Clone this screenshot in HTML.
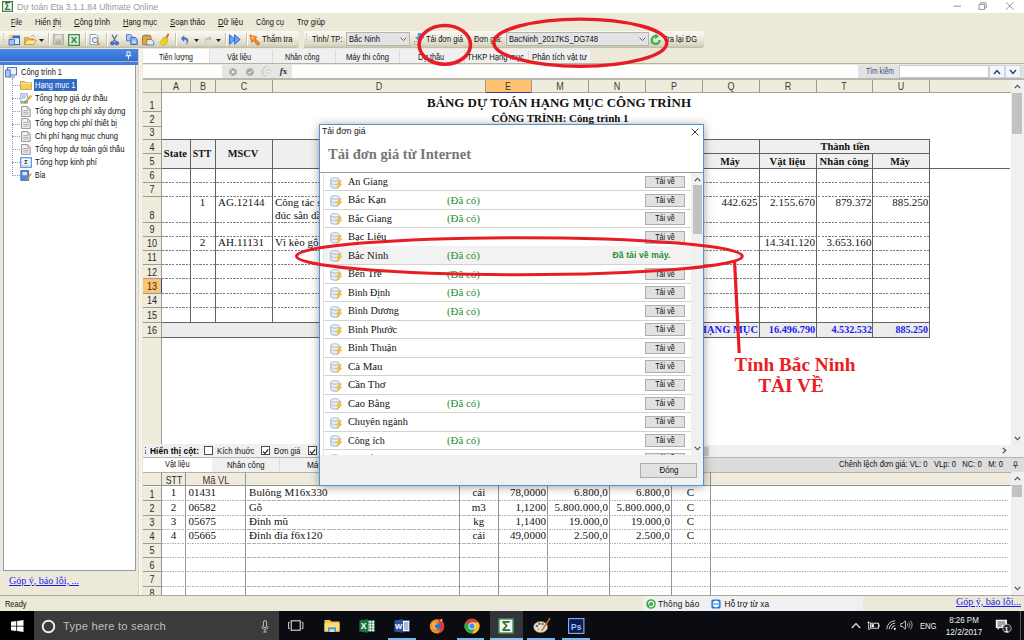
<!DOCTYPE html>
<html lang="vi"><head><meta charset="utf-8"><title>Dự toán Eta</title>
<style>
html,body{margin:0;padding:0;}
body{width:1024px;height:640px;overflow:hidden;position:relative;background:#ece9d8;font-family:"Liberation Sans",sans-serif;}
div,span.t,svg.a{position:absolute;box-sizing:border-box;}
.t{white-space:pre;color:#000;}
.s{font-family:"Liberation Sans",sans-serif;}
.r{font-family:"Liberation Serif",serif;}
.b{font-weight:bold;}
</style></head><body>
<div style="left:0px;top:0px;width:1024px;height:13.3px;background:#fff;"></div>
<svg class="a" style="left:2px;top:1px" width="11" height="11" viewBox="0 0 11 11"><rect x="0" y="0" width="11" height="11" fill="#3c7c46"/><rect x="1.2" y="1.2" width="8.6" height="8.6" fill="#f4f8f4"/><text x="5.5" y="9" font-size="10" font-family="Liberation Sans, sans-serif" font-weight="bold" text-anchor="middle" fill="#2f6f3a">Σ</text></svg>
<span class="t s" style="top:0.80px;font-size:9.3px;line-height:13px;left:17px;transform-origin:0 50%;transform:scaleX(0.9247);color:#999;">Dự toán Eta 3.1.1.84 Ultimate Online</span>
<svg class="a" style="left:950px;top:0" width="70" height="13" viewBox="0 0 70 13" fill="none" stroke="#8a8a8a" stroke-width="0.9"><path d="M3.5 6.2H11"/><path d="M29 4.3H34.6V9.4H29ZM30.6 4.3V2.8H36.2V7.9H34.6"/><path d="M56 2.2L63.6 9.6M63.6 2.2L56 9.6"/></svg>
<span class="t s" style="top:16.80px;font-size:8.25px;line-height:12px;left:10.5px;transform-origin:0 50%;transform:scaleX(0.8263);color:#111;"><u>F</u>ile</span>
<span class="t s" style="top:16.80px;font-size:8.25px;line-height:12px;left:35px;transform-origin:0 50%;transform:scaleX(0.9291);color:#111;">Hiển <u>t</u>hị</span>
<span class="t s" style="top:16.80px;font-size:8.25px;line-height:12px;left:74px;transform-origin:0 50%;transform:scaleX(0.9339);color:#111;"><u>C</u>ông trình</span>
<span class="t s" style="top:16.80px;font-size:8.25px;line-height:12px;left:123px;transform-origin:0 50%;transform:scaleX(0.9037);color:#111;"><u>H</u>ạng mục</span>
<span class="t s" style="top:16.80px;font-size:8.25px;line-height:12px;left:170px;transform-origin:0 50%;transform:scaleX(0.9298);color:#111;"><u>S</u>oạn thảo</span>
<span class="t s" style="top:16.80px;font-size:8.25px;line-height:12px;left:218px;transform-origin:0 50%;transform:scaleX(0.9384);color:#111;"><u>D</u>ữ liệu</span>
<span class="t s" style="top:16.80px;font-size:8.25px;line-height:12px;left:256px;transform-origin:0 50%;transform:scaleX(0.9106);color:#111;">Côn<u>g</u> cụ</span>
<span class="t s" style="top:16.80px;font-size:8.25px;line-height:12px;left:297px;transform-origin:0 50%;transform:scaleX(0.9092);color:#111;">Trợ <u>g</u>iúp</span>
<div style="left:0px;top:30.5px;width:298.5px;height:17.5px;background:linear-gradient(#faf9f4,#efede0 40%,#dcd8c3 85%,#cbc7b1);border-radius:0 3px 3px 0;border-bottom:1px solid #c2beaa;"></div>
<div style="left:2.5px;top:33.5px;width:1.2px;height:1.2px;background:#b5b19f;"></div>
<div style="left:2.5px;top:36.1px;width:1.2px;height:1.2px;background:#b5b19f;"></div>
<div style="left:2.5px;top:38.7px;width:1.2px;height:1.2px;background:#b5b19f;"></div>
<div style="left:2.5px;top:41.3px;width:1.2px;height:1.2px;background:#b5b19f;"></div>
<div style="left:303.5px;top:30.5px;width:400.3px;height:17.5px;background:linear-gradient(#faf9f4,#efede0 40%,#dcd8c3 85%,#cbc7b1);border-radius:0 3px 3px 0;border-bottom:1px solid #c2beaa;"></div>
<div style="left:306.0px;top:33.5px;width:1.2px;height:1.2px;background:#b5b19f;"></div>
<div style="left:306.0px;top:36.1px;width:1.2px;height:1.2px;background:#b5b19f;"></div>
<div style="left:306.0px;top:38.7px;width:1.2px;height:1.2px;background:#b5b19f;"></div>
<div style="left:306.0px;top:41.3px;width:1.2px;height:1.2px;background:#b5b19f;"></div>
<svg class="a" style="left:8px;top:33.7px" width="12" height="12" viewBox="0 0 12 12" ><rect x="3" y="2" width="8.5" height="8.5" fill="#dfe9fb" stroke="#3c66b8" stroke-width="1"/><rect x="3" y="2" width="8.5" height="2.2" fill="#3c66b8"/><rect x="1" y="5.5" width="5.5" height="5.5" fill="#9cc0f0" stroke="#3c66b8" stroke-width="0.8"/><circle cx="2.6" cy="2.4" r="2" fill="#ffd84a"/></svg>
<svg class="a" style="left:24px;top:33.7px" width="13" height="12" viewBox="0 0 13 12" ><path d="M0.5 3.5H4.5L5.5 4.8H10V10.5H0.5Z" fill="#e8b84a" stroke="#b88a20" stroke-width="0.6"/><path d="M0.5 10.5L2.8 6H12.5L10 10.5Z" fill="#ffe28a" stroke="#b88a20" stroke-width="0.6"/><path d="M7 2.5C8.5 1 10.5 1.5 11 3" fill="none" stroke="#7a9a7a" stroke-width="0.7"/></svg>
<svg class="a" style="left:39.0px;top:38.5px" width="5" height="3" viewBox="0 0 5 3" ><path d="M0 0H5L2.5 3Z" fill="#222"/></svg>
<div style="left:48px;top:33px;width:1px;height:13px;background:#c5c2b2;"></div>
<div style="left:49px;top:33px;width:1px;height:13px;background:#fff;"></div>
<svg class="a" style="left:53px;top:34.2px" width="11" height="11" viewBox="0 0 11 11" ><rect x="0.5" y="0.5" width="10" height="10" fill="#c9c7bd" stroke="#a9a79d" stroke-width="0.8"/><rect x="2.5" y="0.8" width="6" height="4" fill="#e3e1d9"/><rect x="2.8" y="6.8" width="5.4" height="3.6" fill="#b3b1a7"/></svg>
<svg class="a" style="left:68px;top:33.7px" width="12" height="12" viewBox="0 0 12 12" ><rect x="0.6" y="0.6" width="10.8" height="10.8" fill="#d6ead4" stroke="#3f8f45" stroke-width="1.2"/><text x="6" y="9.4" font-size="9.5" font-family="Liberation Sans, sans-serif" font-weight="bold" text-anchor="middle" fill="#2a7a30">X</text></svg>
<div style="left:85px;top:33px;width:1px;height:13px;background:#c5c2b2;"></div>
<div style="left:86px;top:33px;width:1px;height:13px;background:#fff;"></div>
<svg class="a" style="left:89px;top:33.7px" width="12" height="12" viewBox="0 0 12 12" ><path d="M1 0.5H7L9 2.5V10.5H1Z" fill="#fff" stroke="#7f8ea8" stroke-width="0.8"/><circle cx="6" cy="6" r="2.7" fill="#e6eefb" stroke="#6a7c98" stroke-width="0.9"/><path d="M8 8L10.8 10.8" stroke="#d89030" stroke-width="1.6"/></svg>
<div style="left:106px;top:33px;width:1px;height:13px;background:#c5c2b2;"></div>
<div style="left:107px;top:33px;width:1px;height:13px;background:#fff;"></div>
<svg class="a" style="left:110px;top:33.900000000000006px" width="9" height="12" viewBox="0 0 9 12" ><path d="M2 0.6L5.6 7.4M7 0.6L3.4 7.4" stroke="#64749a" stroke-width="1.3"/><ellipse cx="2.4" cy="9.2" rx="1.9" ry="1.7" fill="#4a74d4" stroke="#2c4fb0" stroke-width="0.7"/><ellipse cx="6.8" cy="9.2" rx="1.9" ry="1.7" fill="#4a74d4" stroke="#2c4fb0" stroke-width="0.7"/></svg>
<svg class="a" style="left:126px;top:34.2px" width="12" height="11" viewBox="0 0 12 11" ><path d="M0.5 0.5H4.6L6.4 2.2V6.8H0.5Z" fill="#a9c6f4" stroke="#3f6cc8" stroke-width="0.8"/><path d="M4.8 3.5H9.2L11.2 5.4V10.5H4.8Z" fill="#8fb4f0" stroke="#2f5cc0" stroke-width="0.9"/><path d="M6.2 7H9.8M6.2 8.6H9.8" stroke="#e4eefc" stroke-width="0.8"/></svg>
<svg class="a" style="left:142px;top:34.0px" width="13" height="12" viewBox="0 0 13 12" ><rect x="0.5" y="1.6" width="8.4" height="9" rx="0.8" fill="#eaa92a" stroke="#8a6220" stroke-width="0.8"/><rect x="2.6" y="0.5" width="4.2" height="2.2" fill="#9a9484"/><path d="M4.8 5.6H9.8L11.6 7.2V11H4.8Z" fill="#e3ebfa" stroke="#5a6a88" stroke-width="0.8"/></svg>
<svg class="a" style="left:158.5px;top:33.2px" width="11" height="13" viewBox="0 0 11 13" ><path d="M9.6 0.8L7 5.4" stroke="#c07a28" stroke-width="2"/><path d="M5.2 3.8L8.8 6.2L8.4 9L6.4 12.2L3.6 12.4L0.6 9.8Z" fill="#ecd62a" stroke="#c4a418" stroke-width="0.6"/><path d="M3 9.4L5.6 5.2M5.2 11L7.4 6.6" stroke="#c9b020" stroke-width="0.5"/></svg>
<div style="left:175px;top:33px;width:1px;height:13px;background:#c5c2b2;"></div>
<div style="left:176px;top:33px;width:1px;height:13px;background:#fff;"></div>
<svg class="a" style="left:179.5px;top:34.7px" width="10" height="10" viewBox="0 0 10 10" ><path d="M1 3.5L4 0.8V2.6C8 2.3 9.5 5.5 6.5 9.2C7.8 6 6.6 4.6 4 4.6V6.4Z" fill="#3f78e0" stroke="#2a5cc0" stroke-width="0.4"/></svg>
<svg class="a" style="left:193.7px;top:38.5px" width="5" height="3" viewBox="0 0 5 3" ><path d="M0 0H5L2.5 3Z" fill="#222"/></svg>
<svg class="a" style="left:202.5px;top:34.7px" width="10" height="10" viewBox="0 0 10 10" ><path d="M9 3.5L6 0.8V2.6C2 2.3 0.5 5.5 3.5 9.2C2.2 6 3.4 4.6 6 4.6V6.4Z" fill="#c4c2b8"/></svg>
<svg class="a" style="left:216.2px;top:38.5px" width="5" height="3" viewBox="0 0 5 3" ><path d="M0 0H5L2.5 3Z" fill="#222"/></svg>
<div style="left:225px;top:33px;width:1px;height:13px;background:#c5c2b2;"></div>
<div style="left:226px;top:33px;width:1px;height:13px;background:#fff;"></div>
<svg class="a" style="left:229px;top:34.2px" width="12" height="11" viewBox="0 0 12 11" ><path d="M0.6 0.8L6 5.5L0.6 10.2Z" fill="#6aa4f4" stroke="#1c5ed0" stroke-width="0.9"/><path d="M5.6 0.8L11.2 5.5L5.6 10.2Z" fill="#6aa4f4" stroke="#1c5ed0" stroke-width="0.9"/></svg>
<div style="left:246px;top:33px;width:1px;height:13px;background:#c5c2b2;"></div>
<div style="left:247px;top:33px;width:1px;height:13px;background:#fff;"></div>
<svg class="a" style="left:249px;top:33.7px" width="12" height="12" viewBox="0 0 12 12" ><path d="M0.8 1L8 3.2L6.2 4.8L11 9.4L8.8 11.4L4.4 6.6L2.8 8.4Z" fill="#f48a1e" stroke="#d8480e" stroke-width="0.7"/><path d="M1.5 1.8L6 3.4L3.4 6Z" fill="#ffc24a"/></svg>
<span class="t s" style="top:33.80px;font-size:8.25px;line-height:12px;left:262px;transform-origin:0 50%;transform:scaleX(0.9238);color:#111;">Thẩm tra</span>
<span class="t s" style="top:33.80px;font-size:8.25px;line-height:12px;left:311.6px;transform-origin:0 50%;transform:scaleX(0.9151);color:#111;">Tỉnh/ TP:</span>
<div style="left:346.3px;top:32.3px;width:63.5px;height:14px;background:#e3e3e3;border:1px solid #b4b4b4;"></div>
<span class="t s" style="top:34.10px;font-size:8.25px;line-height:12px;left:349.3px;transform-origin:0 50%;transform:scaleX(0.9258);color:#111;">Bắc Ninh</span>
<svg class="a" style="left:400.3px;top:37.3px" width="7" height="4.5" viewBox="0 0 7 4.5" ><path d="M0.6 0.6L3.5 3.6L6.4 0.6" fill="none" stroke="#444" stroke-width="0.8"/></svg>
<svg class="a" style="left:414px;top:33px" width="11" height="12" viewBox="0 0 11 12" ><path d="M4.2 0.5H7.2V4.5H9.6L5.7 8.6L1.8 4.5H4.2Z" fill="#5aa0f0" stroke="#2a68c8" stroke-width="0.6"/><rect x="0.6" y="8.4" width="4.6" height="3" fill="#e8e8e8" stroke="#8a8a8a" stroke-width="0.5"/></svg>
<span class="t s" style="top:33.80px;font-size:8.25px;line-height:12px;left:426px;transform-origin:0 50%;transform:scaleX(0.8882);color:#111;">Tải đơn giá</span>
<span class="t s" style="top:33.80px;font-size:8.25px;line-height:12px;left:474px;transform-origin:0 50%;transform:scaleX(0.8871);color:#111;">Đơn giá:</span>
<div style="left:506px;top:32.3px;width:142.5px;height:14px;background:#e3e3e3;border:1px solid #b4b4b4;"></div>
<span class="t s" style="top:34.10px;font-size:8.25px;line-height:12px;left:509px;transform-origin:0 50%;transform:scaleX(0.9284);color:#111;">BacNinh_2017KS_DG748</span>
<svg class="a" style="left:639.0px;top:37.3px" width="7" height="4.5" viewBox="0 0 7 4.5" ><path d="M0.6 0.6L3.5 3.6L6.4 0.6" fill="none" stroke="#444" stroke-width="0.8"/></svg>
<svg class="a" style="left:650.3px;top:33.8px" width="11.5" height="11.5" viewBox="0 0 11.5 11.5" ><path d="M9.6 6A3.9 3.9 0 1 1 5.7 2.1" fill="none" stroke="#3db54a" stroke-width="2.4"/><path d="M5.2 -0.6L9.2 2.3L5.2 5.2Z" fill="#3db54a"/><path d="M2.2 6.6L0.2 9.2L3.6 9.6Z" fill="#3db54a"/></svg>
<span class="t s" style="top:33.80px;font-size:8.25px;line-height:12px;left:663px;transform-origin:0 50%;transform:scaleX(0.9116);color:#111;">Tra lại ĐG</span>
<div style="left:0px;top:48.9px;width:138px;height:12px;background:linear-gradient(#4b89e4,#2f6fd6);"></div>
<div style="left:0px;top:60.9px;width:138px;height:1.3px;background:#b9b6a6;"></div>
<div style="left:0px;top:62.2px;width:138px;height:2.6px;background:#3f7fe0;"></div>
<svg class="a" style="left:124.5px;top:50.5px" width="7" height="9" viewBox="0 0 7 9" ><path d="M2 0.8H5V4.6H2Z" fill="none" stroke="#fff" stroke-width="0.9"/><path d="M0.6 4.8H6.4M3.5 4.8V8.4" stroke="#fff" stroke-width="0.9"/></svg>
<div style="left:2.5px;top:64.7px;width:133.5px;height:506px;background:#fff;border:1px solid #8f9db3;border-top:none;"></div>
<div style="left:138.3px;top:48.9px;width:4.2px;height:546px;background:#f6f4ea;"></div>
<div style="left:138.3px;top:48.9px;width:0.8px;height:546px;background:#d8d5c5;"></div>
<div style="left:11.5px;top:78px;width:0px;height:97.5px;border-left:1px dotted #9a9a9a;"></div>
<div style="left:12px;top:85px;width:7.5px;height:0px;border-top:1px dotted #9a9a9a;"></div>
<div style="left:12px;top:98px;width:7.5px;height:0px;border-top:1px dotted #9a9a9a;"></div>
<div style="left:12px;top:111px;width:7.5px;height:0px;border-top:1px dotted #9a9a9a;"></div>
<div style="left:12px;top:123.6px;width:7.5px;height:0px;border-top:1px dotted #9a9a9a;"></div>
<div style="left:12px;top:136.4px;width:7.5px;height:0px;border-top:1px dotted #9a9a9a;"></div>
<div style="left:12px;top:149.2px;width:7.5px;height:0px;border-top:1px dotted #9a9a9a;"></div>
<div style="left:12px;top:162px;width:7.5px;height:0px;border-top:1px dotted #9a9a9a;"></div>
<div style="left:12px;top:175px;width:7.5px;height:0px;border-top:1px dotted #9a9a9a;"></div>
<svg class="a" style="left:5px;top:66.5px" width="12" height="11" viewBox="0 0 12 11" ><rect x="2.5" y="0.6" width="9" height="7.4" fill="#e9f1fd" stroke="#3a62b0" stroke-width="0.9"/><rect x="0.6" y="3" width="4.6" height="7" fill="#a9c6f2" stroke="#3a62b0" stroke-width="0.8"/><path d="M5 10H10" stroke="#6a86b8" stroke-width="1"/></svg>
<span class="t s" style="top:66.80px;font-size:8.25px;line-height:12px;left:20.5px;transform-origin:0 50%;transform:scaleX(0.9030);color:#111;">Công trình 1</span>
<svg class="a" style="left:20px;top:80px" width="12" height="10" viewBox="0 0 12 10" ><path d="M0.5 1.5H4.6L5.6 2.8H11.5V9.5H0.5Z" fill="#f3cf62" stroke="#b99328" stroke-width="0.7"/><path d="M0.8 3.6H11.2" stroke="#fbe9a6" stroke-width="0.8"/></svg>
<div style="left:33.5px;top:79.2px;width:43.8px;height:12.3px;background:#316ac5;"></div>
<span class="t s" style="top:79.80px;font-size:8.25px;line-height:12px;left:35px;transform-origin:0 50%;transform:scaleX(0.9104);color:#fff;">Hạng mục 1</span>
<svg class="a" style="left:20px;top:92.5px" width="12" height="11" viewBox="0 0 12 11" ><path d="M0.8 0.8H7.4V10.2H0.8Z" fill="#f6f8fc" stroke="#7a8aa8" stroke-width="0.8"/><path d="M2 3H6M2 4.8H5" stroke="#5a7ac0" stroke-width="0.7"/><path d="M10.6 2.2L5.4 8L4.6 10L6.6 9.2L11.6 3.4Z" fill="#e8c83a" stroke="#8a7420" stroke-width="0.5"/><path d="M1.2 9.6C3 7.6 4.4 9.8 6.2 8.4" fill="none" stroke="#4a9a3a" stroke-width="1.1"/></svg>
<svg class="a" style="left:20.5px;top:105.5px" width="10" height="11" viewBox="0 0 10 11" ><path d="M0.6 0.6H6.6L9.2 3.2V10.4H0.6Z" fill="#f4f4f4" stroke="#868686" stroke-width="0.9"/><path d="M6.4 0.8V3.4H9" fill="none" stroke="#9a9a9a" stroke-width="0.6"/><path d="M2.2 4.6H7.6M2.2 6.3H7.6M2.2 8H7.6" stroke="#9c9c9c" stroke-width="0.8"/></svg>
<svg class="a" style="left:20.5px;top:118.1px" width="10" height="11" viewBox="0 0 10 11" ><path d="M0.6 0.6H6.6L9.2 3.2V10.4H0.6Z" fill="#f4f4f4" stroke="#868686" stroke-width="0.9"/><path d="M6.4 0.8V3.4H9" fill="none" stroke="#9a9a9a" stroke-width="0.6"/><path d="M2.2 4.6H7.6M2.2 6.3H7.6M2.2 8H7.6" stroke="#9c9c9c" stroke-width="0.8"/></svg>
<svg class="a" style="left:20.5px;top:130.9px" width="10" height="11" viewBox="0 0 10 11" ><path d="M0.6 0.6H6.6L9.2 3.2V10.4H0.6Z" fill="#f4f4f4" stroke="#868686" stroke-width="0.9"/><path d="M6.4 0.8V3.4H9" fill="none" stroke="#9a9a9a" stroke-width="0.6"/><path d="M2.2 4.6H7.6M2.2 6.3H7.6M2.2 8H7.6" stroke="#9c9c9c" stroke-width="0.8"/></svg>
<svg class="a" style="left:20.5px;top:143.7px" width="10" height="11" viewBox="0 0 10 11" ><path d="M0.6 0.6H6.6L9.2 3.2V10.4H0.6Z" fill="#f4f4f4" stroke="#868686" stroke-width="0.9"/><path d="M6.4 0.8V3.4H9" fill="none" stroke="#9a9a9a" stroke-width="0.6"/><path d="M2.2 4.6H7.6M2.2 6.3H7.6M2.2 8H7.6" stroke="#9c9c9c" stroke-width="0.8"/></svg>
<svg class="a" style="left:20px;top:156.5px" width="12" height="11" viewBox="0 0 12 11" ><rect x="0.7" y="0.7" width="10.6" height="9.6" fill="#fbfdff" stroke="#4f92e0" stroke-width="1.2"/><text x="6" y="7.2" font-size="6" font-family="Liberation Sans, sans-serif" font-weight="bold" text-anchor="middle" fill="#222">Σ</text><path d="M2 8.4H10" stroke="#9ab8e0" stroke-width="0.7"/><path d="M2 4.9H3.4M8.6 4.9H10" stroke="#9ab8e0" stroke-width="0.6"/></svg>
<svg class="a" style="left:20px;top:169.5px" width="12" height="11" viewBox="0 0 12 11" ><path d="M0.8 0.6H8.6V10.4H0.8Z" fill="#4a8ae0" stroke="#2a5ab0" stroke-width="0.8"/><rect x="2.4" y="2" width="4.6" height="3.2" fill="#dce8fb"/><path d="M10.8 3.4L6 9.2L5.2 10.6L6.8 10L11.6 4.2Z" fill="#f2a23a" stroke="#b86a1a" stroke-width="0.4"/></svg>
<span class="t s" style="top:92.80px;font-size:8.25px;line-height:12px;left:34.5px;transform-origin:0 50%;transform:scaleX(0.9091);color:#111;">Tổng hợp giá dự thầu</span>
<span class="t s" style="top:105.80px;font-size:8.25px;line-height:12px;left:34.5px;transform-origin:0 50%;transform:scaleX(0.9141);color:#111;">Tổng hợp chi phí xây dựng</span>
<span class="t s" style="top:118.40px;font-size:8.25px;line-height:12px;left:34.5px;transform-origin:0 50%;transform:scaleX(0.9225);color:#111;">Tổng hợp chi phí thiết bị</span>
<span class="t s" style="top:131.20px;font-size:8.25px;line-height:12px;left:34.5px;transform-origin:0 50%;transform:scaleX(0.9280);color:#111;">Chi phí hạng mục chung</span>
<span class="t s" style="top:144.00px;font-size:8.25px;line-height:12px;left:34.5px;transform-origin:0 50%;transform:scaleX(0.9124);color:#111;">Tổng hợp dự toán gói thầu</span>
<span class="t s" style="top:156.80px;font-size:8.25px;line-height:12px;left:34.5px;transform-origin:0 50%;transform:scaleX(0.9271);color:#111;">Tổng hợp kinh phí</span>
<span class="t s" style="top:169.80px;font-size:8.25px;line-height:12px;left:34.5px;transform-origin:0 50%;transform:scaleX(0.8474);color:#111;">Bìa</span>
<span class="t r" style="top:573.50px;font-size:10.5px;line-height:14px;left:9px;transform-origin:0 50%;transform:scaleX(0.9562);color:#1a1aee;text-decoration:underline;">Góp ý, báo lỗi, ...</span>
<div style="left:143px;top:48.9px;width:447px;height:14.3px;background:#f0f0f0;"></div>
<div style="left:143px;top:48.9px;width:65.5px;height:14.6px;background:#fff;"></div>
<span class="t s" style="top:52.10px;font-size:8.25px;line-height:12px;left:159px;transform-origin:0 50%;transform:scaleX(0.8503);color:#111;">Tiên lượng</span>
<div style="left:208.5px;top:49.5px;width:0.8px;height:13.5px;background:#dcdcdc;"></div>
<span class="t s" style="top:52.10px;font-size:8.25px;line-height:12px;left:227px;transform-origin:0 50%;transform:scaleX(0.8717);color:#111;">Vật liệu</span>
<div style="left:272px;top:49.5px;width:0.8px;height:13.5px;background:#dcdcdc;"></div>
<span class="t s" style="top:52.10px;font-size:8.25px;line-height:12px;left:284.5px;transform-origin:0 50%;transform:scaleX(0.8645);color:#111;">Nhân công</span>
<div style="left:335px;top:49.5px;width:0.8px;height:13.5px;background:#dcdcdc;"></div>
<span class="t s" style="top:52.10px;font-size:8.25px;line-height:12px;left:345.5px;transform-origin:0 50%;transform:scaleX(0.9192);color:#111;">Máy thi công</span>
<div style="left:399px;top:49.5px;width:0.8px;height:13.5px;background:#dcdcdc;"></div>
<span class="t s" style="top:52.10px;font-size:8.25px;line-height:12px;left:418px;transform-origin:0 50%;transform:scaleX(0.8712);color:#111;">Dự thầu</span>
<div style="left:463.5px;top:49.5px;width:0.8px;height:13.5px;background:#dcdcdc;"></div>
<span class="t s" style="top:52.10px;font-size:8.25px;line-height:12px;left:467px;transform-origin:0 50%;transform:scaleX(0.9231);color:#111;">THKP Hạng mục</span>
<div style="left:528px;top:49.5px;width:0.8px;height:13.5px;background:#dcdcdc;"></div>
<span class="t s" style="top:52.10px;font-size:8.25px;line-height:12px;left:532px;transform-origin:0 50%;transform:scaleX(0.9440);color:#111;">Phân tích vật tư</span>
<div style="left:143px;top:63.2px;width:881px;height:1.3px;background:#b4b2a8;"></div>
<div style="left:143px;top:64.5px;width:715px;height:13.5px;background:#fff;"></div>
<div style="left:221.5px;top:64.5px;width:70.5px;height:13.5px;background:#e6e6e6;"></div>
<svg class="a" style="left:229px;top:68px" width="8" height="8" viewBox="0 0 8 8" ><circle cx="4" cy="4" r="3.8" fill="#a9a9a9"/><path d="M2.5 2.5L5.5 5.5M5.5 2.5L2.5 5.5" stroke="#fff" stroke-width="0.9"/></svg>
<svg class="a" style="left:245.5px;top:68px" width="8" height="8" viewBox="0 0 8 8" ><circle cx="4" cy="4" r="3.8" fill="#a9a9a9"/><path d="M2.2 4.2L3.6 5.5L5.8 2.8" stroke="#fff" stroke-width="0.9" fill="none"/></svg>
<svg class="a" style="left:261px;top:66px" width="12" height="11" viewBox="0 0 12 11" ><path d="M5 0.5A5.2 5.2 0 0 0 5 10.5" fill="none" stroke="#b9b9b9" stroke-width="0.9"/><circle cx="7.4" cy="5.5" r="2.3" fill="#dcdcdc" stroke="#c2c2c2" stroke-width="0.5"/><path d="M6.2 5.5H8.6" stroke="#fff" stroke-width="0.8"/></svg>
<span class="t r" style="top:64.80px;font-size:9px;line-height:13px;left:279.8px;color:#333;font-weight:bold;"><i>f</i>x</span>
<div style="left:143px;top:78px;width:881px;height:2px;background:#b9b7ad;"></div>
<div style="left:857.5px;top:64.5px;width:166.5px;height:13.5px;background:#e2e2e4;"></div>
<span class="t s" style="top:66.00px;font-size:8.25px;line-height:12px;left:866px;transform-origin:0 50%;transform:scaleX(0.8254);color:#3b4f78;">Tìm kiếm</span>
<div style="left:898.5px;top:65px;width:90px;height:13px;background:#fff;border:1px solid #c4c9d6;"></div>
<div style="left:988.5px;top:65px;width:16px;height:13px;background:#f4f6fb;border:1px solid #cfd4e0;"></div>
<div style="left:1004.5px;top:65px;width:16px;height:13px;background:#f4f6fb;border:1px solid #cfd4e0;"></div>
<svg class="a" style="left:992.5px;top:68.5px" width="8" height="6" viewBox="0 0 8 6" ><path d="M1 5L4 1.6L7 5" fill="none" stroke="#2b3f78" stroke-width="1.5"/></svg>
<svg class="a" style="left:1008.5px;top:68.5px" width="8" height="6" viewBox="0 0 8 6" ><path d="M1 1L4 4.4L7 1" fill="none" stroke="#2b3f78" stroke-width="1.5"/></svg>
<div style="left:143px;top:80px;width:867.5px;height:365px;background:#fff;"></div>
<div style="left:143px;top:80px;width:867.5px;height:12.5px;background:#efebdd;border-bottom:1px solid #a6a393;"></div>
<div style="left:161.0px;top:80px;width:1px;height:12.5px;background:#9e9b8c;"></div>
<div style="left:189.5px;top:80px;width:1px;height:12.5px;background:#9e9b8c;"></div>
<span class="t s" style="top:79.70px;font-size:10px;line-height:14px;left:175.75px;transform:translateX(-50%) ;color:#3c3c3c;transform:translateX(-50%) scaleX(.9);">A</span>
<div style="left:214.5px;top:80px;width:1px;height:12.5px;background:#9e9b8c;"></div>
<span class="t s" style="top:79.70px;font-size:10px;line-height:14px;left:202.5px;transform:translateX(-50%) ;color:#3c3c3c;transform:translateX(-50%) scaleX(.9);">B</span>
<div style="left:271.5px;top:80px;width:1px;height:12.5px;background:#9e9b8c;"></div>
<span class="t s" style="top:79.70px;font-size:10px;line-height:14px;left:243.5px;transform:translateX(-50%) ;color:#3c3c3c;transform:translateX(-50%) scaleX(.9);">C</span>
<div style="left:485.0px;top:80px;width:1px;height:12.5px;background:#9e9b8c;"></div>
<span class="t s" style="top:79.70px;font-size:10px;line-height:14px;left:378.75px;transform:translateX(-50%) ;color:#3c3c3c;transform:translateX(-50%) scaleX(.9);">D</span>
<div style="left:485.5px;top:80px;width:45.5px;height:12.5px;background:#fdc272;border-bottom:1px solid #3a3ab0;"></div>
<div style="left:530.5px;top:80px;width:1px;height:12.5px;background:#9e9b8c;"></div>
<span class="t s" style="top:79.70px;font-size:10px;line-height:14px;left:508.25px;transform:translateX(-50%) ;color:#3c3c3c;transform:translateX(-50%) scaleX(.9);">E</span>
<div style="left:588.0px;top:80px;width:1px;height:12.5px;background:#9e9b8c;"></div>
<span class="t s" style="top:79.70px;font-size:10px;line-height:14px;left:559.75px;transform:translateX(-50%) ;color:#3c3c3c;transform:translateX(-50%) scaleX(.9);">M</span>
<div style="left:644.5px;top:80px;width:1px;height:12.5px;background:#9e9b8c;"></div>
<span class="t s" style="top:79.70px;font-size:10px;line-height:14px;left:616.75px;transform:translateX(-50%) ;color:#3c3c3c;transform:translateX(-50%) scaleX(.9);">N</span>
<div style="left:701.5px;top:80px;width:1px;height:12.5px;background:#9e9b8c;"></div>
<span class="t s" style="top:79.70px;font-size:10px;line-height:14px;left:673.5px;transform:translateX(-50%) ;color:#3c3c3c;transform:translateX(-50%) scaleX(.9);">P</span>
<div style="left:759.0px;top:80px;width:1px;height:12.5px;background:#9e9b8c;"></div>
<span class="t s" style="top:79.70px;font-size:10px;line-height:14px;left:730.75px;transform:translateX(-50%) ;color:#3c3c3c;transform:translateX(-50%) scaleX(.9);">Q</span>
<div style="left:815.5px;top:80px;width:1px;height:12.5px;background:#9e9b8c;"></div>
<span class="t s" style="top:79.70px;font-size:10px;line-height:14px;left:787.75px;transform:translateX(-50%) ;color:#3c3c3c;transform:translateX(-50%) scaleX(.9);">R</span>
<div style="left:872.0px;top:80px;width:1px;height:12.5px;background:#9e9b8c;"></div>
<span class="t s" style="top:79.70px;font-size:10px;line-height:14px;left:844.25px;transform:translateX(-50%) ;color:#3c3c3c;transform:translateX(-50%) scaleX(.9);">T</span>
<div style="left:929.0px;top:80px;width:1px;height:12.5px;background:#9e9b8c;"></div>
<span class="t s" style="top:79.70px;font-size:10px;line-height:14px;left:901.0px;transform:translateX(-50%) ;color:#3c3c3c;transform:translateX(-50%) scaleX(.9);">U</span>
<div style="left:143px;top:92.5px;width:18.5px;height:352.5px;background:#efebdd;border-right:1px solid #9e9b8c;"></div>
<div style="left:143px;top:111.1px;width:18.5px;height:1px;background:#9e9b8c;"></div>
<span class="t s" style="top:98.50px;font-size:10px;line-height:14px;left:152px;transform:translateX(-50%) ;color:#2a2a2a;transform:translateX(-50%) scaleX(.9);">1</span>
<div style="left:143px;top:125.5px;width:18.5px;height:1px;background:#9e9b8c;"></div>
<span class="t s" style="top:112.90px;font-size:10px;line-height:14px;left:152px;transform:translateX(-50%) ;color:#2a2a2a;transform:translateX(-50%) scaleX(.9);">2</span>
<div style="left:143px;top:139.0px;width:18.5px;height:1px;background:#9e9b8c;"></div>
<span class="t s" style="top:126.40px;font-size:10px;line-height:14px;left:152px;transform:translateX(-50%) ;color:#2a2a2a;transform:translateX(-50%) scaleX(.9);">3</span>
<div style="left:143px;top:153.25px;width:18.5px;height:1px;background:#9e9b8c;"></div>
<span class="t s" style="top:140.65px;font-size:10px;line-height:14px;left:152px;transform:translateX(-50%) ;color:#2a2a2a;transform:translateX(-50%) scaleX(.9);">4</span>
<div style="left:143px;top:167.5px;width:18.5px;height:1px;background:#9e9b8c;"></div>
<span class="t s" style="top:154.90px;font-size:10px;line-height:14px;left:152px;transform:translateX(-50%) ;color:#2a2a2a;transform:translateX(-50%) scaleX(.9);">5</span>
<div style="left:143px;top:182.0px;width:18.5px;height:1px;background:#9e9b8c;"></div>
<span class="t s" style="top:169.40px;font-size:10px;line-height:14px;left:152px;transform:translateX(-50%) ;color:#2a2a2a;transform:translateX(-50%) scaleX(.9);">6</span>
<div style="left:143px;top:195.75px;width:18.5px;height:1px;background:#9e9b8c;"></div>
<span class="t s" style="top:183.15px;font-size:10px;line-height:14px;left:152px;transform:translateX(-50%) ;color:#2a2a2a;transform:translateX(-50%) scaleX(.9);">7</span>
<div style="left:143px;top:222.0px;width:18.5px;height:1px;background:#9e9b8c;"></div>
<span class="t s" style="top:209.40px;font-size:10px;line-height:14px;left:152px;transform:translateX(-50%) ;color:#2a2a2a;transform:translateX(-50%) scaleX(.9);">8</span>
<div style="left:143px;top:235.75px;width:18.5px;height:1px;background:#9e9b8c;"></div>
<span class="t s" style="top:223.15px;font-size:10px;line-height:14px;left:152px;transform:translateX(-50%) ;color:#2a2a2a;transform:translateX(-50%) scaleX(.9);">9</span>
<div style="left:143px;top:250.0px;width:18.5px;height:1px;background:#9e9b8c;"></div>
<span class="t s" style="top:237.40px;font-size:10px;line-height:14px;left:152px;transform:translateX(-50%) ;color:#2a2a2a;transform:translateX(-50%) scaleX(.9);">10</span>
<div style="left:143px;top:264.0px;width:18.5px;height:1px;background:#9e9b8c;"></div>
<span class="t s" style="top:251.40px;font-size:10px;line-height:14px;left:152px;transform:translateX(-50%) ;color:#2a2a2a;transform:translateX(-50%) scaleX(.9);">11</span>
<div style="left:143px;top:278.25px;width:18.5px;height:1px;background:#9e9b8c;"></div>
<span class="t s" style="top:265.65px;font-size:10px;line-height:14px;left:152px;transform:translateX(-50%) ;color:#2a2a2a;transform:translateX(-50%) scaleX(.9);">12</span>
<div style="left:143px;top:278.75px;width:18.5px;height:14.25px;background:#fdc272;border-right:1px solid #3a3ab0;"></div>
<div style="left:143px;top:292.5px;width:18.5px;height:1px;background:#9e9b8c;"></div>
<span class="t s" style="top:279.90px;font-size:10px;line-height:14px;left:152px;transform:translateX(-50%) ;color:#2a2a2a;transform:translateX(-50%) scaleX(.9);">13</span>
<div style="left:143px;top:307.0px;width:18.5px;height:1px;background:#9e9b8c;"></div>
<span class="t s" style="top:294.40px;font-size:10px;line-height:14px;left:152px;transform:translateX(-50%) ;color:#2a2a2a;transform:translateX(-50%) scaleX(.9);">14</span>
<div style="left:143px;top:321.5px;width:18.5px;height:1px;background:#9e9b8c;"></div>
<span class="t s" style="top:308.90px;font-size:10px;line-height:14px;left:152px;transform:translateX(-50%) ;color:#2a2a2a;transform:translateX(-50%) scaleX(.9);">15</span>
<div style="left:143px;top:337.0px;width:18.5px;height:1px;background:#9e9b8c;"></div>
<span class="t s" style="top:324.40px;font-size:10px;line-height:14px;left:152px;transform:translateX(-50%) ;color:#2a2a2a;transform:translateX(-50%) scaleX(.9);">16</span>
<div style="left:161.5px;top:139.5px;width:768.0px;height:28.5px;background:#efefef;"></div>
<div style="left:161.5px;top:322px;width:768.0px;height:15.5px;background:#ececec;"></div>
<div style="left:161.5px;top:182.0px;width:768.0px;height:1px;background:repeating-linear-gradient(90deg,#7c7c7c 0 2.2px,transparent 2.2px 3.4px);"></div>
<div style="left:161.5px;top:195.75px;width:768.0px;height:1px;background:repeating-linear-gradient(90deg,#7c7c7c 0 2.2px,transparent 2.2px 3.4px);"></div>
<div style="left:161.5px;top:222.0px;width:768.0px;height:1px;background:repeating-linear-gradient(90deg,#7c7c7c 0 2.2px,transparent 2.2px 3.4px);"></div>
<div style="left:161.5px;top:235.75px;width:768.0px;height:1px;background:repeating-linear-gradient(90deg,#7c7c7c 0 2.2px,transparent 2.2px 3.4px);"></div>
<div style="left:161.5px;top:250.0px;width:768.0px;height:1px;background:repeating-linear-gradient(90deg,#7c7c7c 0 2.2px,transparent 2.2px 3.4px);"></div>
<div style="left:161.5px;top:264.0px;width:768.0px;height:1px;background:repeating-linear-gradient(90deg,#7c7c7c 0 2.2px,transparent 2.2px 3.4px);"></div>
<div style="left:161.5px;top:278.25px;width:768.0px;height:1px;background:repeating-linear-gradient(90deg,#7c7c7c 0 2.2px,transparent 2.2px 3.4px);"></div>
<div style="left:161.5px;top:292.5px;width:768.0px;height:1px;background:repeating-linear-gradient(90deg,#7c7c7c 0 2.2px,transparent 2.2px 3.4px);"></div>
<div style="left:161.5px;top:307.0px;width:768.0px;height:1px;background:repeating-linear-gradient(90deg,#7c7c7c 0 2.2px,transparent 2.2px 3.4px);"></div>
<div style="left:161.5px;top:139px;width:768.0px;height:1px;background:#626262;"></div>
<div style="left:161.5px;top:167.5px;width:848.5px;height:1px;background:#626262;"></div>
<div style="left:161.5px;top:321.5px;width:768.0px;height:1px;background:#626262;"></div>
<div style="left:161.5px;top:337px;width:768.0px;height:1px;background:#626262;"></div>
<div style="left:588.5px;top:153.25px;width:341.0px;height:1px;background:#626262;"></div>
<div style="left:189.5px;top:139.5px;width:1px;height:198px;background:#626262;"></div>
<div style="left:214.5px;top:139.5px;width:1px;height:198px;background:#626262;"></div>
<div style="left:271.5px;top:139.5px;width:1px;height:198px;background:#626262;"></div>
<div style="left:485.0px;top:139.5px;width:1px;height:198px;background:#626262;"></div>
<div style="left:530.5px;top:139.5px;width:1px;height:198px;background:#626262;"></div>
<div style="left:588.0px;top:139.5px;width:1px;height:198px;background:#626262;"></div>
<div style="left:759.0px;top:139.5px;width:1px;height:198px;background:#626262;"></div>
<div style="left:929.0px;top:139.5px;width:1px;height:198px;background:#626262;"></div>
<div style="left:644.5px;top:153.5px;width:1px;height:184px;background:#626262;"></div>
<div style="left:701.5px;top:153.5px;width:1px;height:184px;background:#626262;"></div>
<div style="left:815.5px;top:153.5px;width:1px;height:184px;background:#626262;"></div>
<div style="left:872.0px;top:153.5px;width:1px;height:184px;background:#626262;"></div>
<span class="t r b" style="top:93.60px;font-size:13.5px;line-height:18px;left:559px;transform:translateX(-50%) scaleX(0.9581);color:#111;">BẢNG DỰ TOÁN HẠNG MỤC CÔNG TRÌNH</span>
<span class="t r b" style="top:110.50px;font-size:11px;line-height:15px;left:559.5px;transform:translateX(-50%) scaleX(0.9932);color:#111;">CÔNG TRÌNH: Công trình 1</span>
<span class="t r b" style="top:146.30px;font-size:10.6px;line-height:15px;letter-spacing:0.070px;left:175.4px;transform:translateX(-50%) ;color:#111;">State</span>
<span class="t r b" style="top:146.30px;font-size:10.6px;line-height:15px;left:201.5px;transform:translateX(-50%) scaleX(0.9186);color:#111;">STT</span>
<span class="t r b" style="top:146.30px;font-size:10.6px;line-height:15px;left:243px;transform:translateX(-50%) scaleX(0.9775);color:#111;">MSCV</span>
<span class="t r b" style="top:146.30px;font-size:10.6px;line-height:15px;left:378px;transform:translateX(-50%) ;color:#111;">Nội dung công việc</span>
<span class="t r b" style="top:146.30px;font-size:10.6px;line-height:15px;left:508px;transform:translateX(-50%) ;color:#111;">ĐVT</span>
<span class="t r b" style="top:146.30px;font-size:10.6px;line-height:15px;left:559.5px;transform:translateX(-50%) ;color:#111;">Khối lượng</span>
<span class="t r b" style="top:139.00px;font-size:10.6px;line-height:15px;left:674px;transform:translateX(-50%) ;color:#111;">Đơn giá</span>
<span class="t r b" style="top:153.50px;font-size:10.6px;line-height:15px;left:616.5px;transform:translateX(-50%) ;color:#111;">Vật liệu</span>
<span class="t r b" style="top:153.50px;font-size:10.6px;line-height:15px;left:673.5px;transform:translateX(-50%) ;color:#111;">Nhân công</span>
<span class="t r b" style="top:153.50px;font-size:10.6px;line-height:15px;left:729.8px;transform:translateX(-50%) scaleX(0.9517);color:#111;">Máy</span>
<span class="t r b" style="top:139.00px;font-size:10.6px;line-height:15px;left:844.6px;transform:translateX(-50%) scaleX(0.9886);color:#111;">Thành tiền</span>
<span class="t r b" style="top:153.50px;font-size:10.6px;line-height:15px;letter-spacing:0.049px;left:787.5px;transform:translateX(-50%) ;color:#111;">Vật liệu</span>
<span class="t r b" style="top:153.50px;font-size:10.6px;line-height:15px;letter-spacing:0.069px;left:844.1px;transform:translateX(-50%) ;color:#111;">Nhân công</span>
<span class="t r b" style="top:153.50px;font-size:10.6px;line-height:15px;left:900.3px;transform:translateX(-50%) scaleX(0.9566);color:#111;">Máy</span>
<span class="t r" style="top:195.10px;font-size:11px;line-height:15px;left:202.5px;transform:translateX(-50%) ;color:#111;">1</span>
<span class="t r" style="top:195.10px;font-size:11px;line-height:15px;letter-spacing:0.045px;left:218px;color:#111;">AG.12144</span>
<span class="t r" style="top:195.10px;font-size:11px;line-height:15px;left:275px;color:#111;">Công tác sản xuất lắp dựng cốt thép bê tông</span>
<span class="t r" style="top:208.00px;font-size:11px;line-height:15px;left:275px;color:#111;">đúc sẵn dầm, giằng</span>
<span class="t r" style="top:195.10px;font-size:11px;line-height:15px;letter-spacing:0.034px;right:266.5px;color:#111;">442.625</span>
<span class="t r" style="top:195.10px;font-size:11px;line-height:15px;letter-spacing:0.111px;right:209px;color:#111;">2.155.670</span>
<span class="t r" style="top:195.10px;font-size:11px;line-height:15px;letter-spacing:0.034px;right:152.5px;color:#111;">879.372</span>
<span class="t r" style="top:195.10px;font-size:11px;line-height:15px;letter-spacing:0.034px;right:95.70000000000005px;color:#111;">885.250</span>
<span class="t r" style="top:234.80px;font-size:11px;line-height:15px;left:202.5px;transform:translateX(-50%) ;color:#111;">2</span>
<span class="t r" style="top:234.80px;font-size:11px;line-height:15px;letter-spacing:0.084px;left:218px;color:#111;">AH.11131</span>
<span class="t r" style="top:234.80px;font-size:11px;line-height:15px;left:275px;color:#111;">Vì kèo gỗ mái ngói khẩu độ</span>
<span class="t r" style="top:234.80px;font-size:11px;line-height:15px;letter-spacing:0.100px;right:209px;color:#111;">14.341.120</span>
<span class="t r" style="top:234.80px;font-size:11px;line-height:15px;letter-spacing:0.111px;right:152.5px;color:#111;">3.653.160</span>
<span class="t r" style="top:323.00px;font-size:10.5px;line-height:14px;right:266px;color:#1c1cf0;font-weight:bold;">TỔNG HẠNG MỤC</span>
<span class="t r" style="top:323.00px;font-size:10.5px;line-height:14px;right:209px;transform-origin:100% 50%;transform:scaleX(0.9841);color:#1c1cf0;font-weight:bold;">16.496.790</span>
<span class="t r" style="top:323.00px;font-size:10.5px;line-height:14px;right:152.5px;transform-origin:100% 50%;transform:scaleX(0.9643);color:#1c1cf0;font-weight:bold;">4.532.532</span>
<span class="t r" style="top:323.00px;font-size:10.5px;line-height:14px;right:95.70000000000005px;transform-origin:100% 50%;transform:scaleX(0.9524);color:#1c1cf0;font-weight:bold;">885.250</span>
<div style="left:1010.5px;top:80px;width:13.5px;height:365px;background:#f0f0f0;"></div>
<div style="left:1011.8px;top:92.5px;width:10px;height:41.5px;background:#c2c2c2;"></div>
<svg class="a" style="left:1013.7px;top:84px" width="7" height="5" viewBox="0 0 7 5" ><path d="M0.8 4.2L3.5 1.2L6.2 4.2" fill="none" stroke="#444" stroke-width="1.1"/></svg>
<svg class="a" style="left:1013.7px;top:436px" width="7" height="5" viewBox="0 0 7 5" ><path d="M0.8 0.8L3.5 3.8L6.2 0.8" fill="none" stroke="#444" stroke-width="1.1"/></svg>
<div style="left:143px;top:445px;width:881px;height:11.7px;background:#f0f0f0;"></div>
<svg class="a" style="left:1001.5px;top:447.3px" width="5" height="7" viewBox="0 0 5 7" ><path d="M0.8 0.8L3.8 3.5L0.8 6.2" fill="none" stroke="#444" stroke-width="1.1"/></svg>
<div style="left:455px;top:446.5px;width:253.5px;height:9px;background:#cdcdcd;"></div>
<div style="left:143px;top:444px;width:300px;height:12.7px;background:#f0f0f0;"></div>
<div style="left:145px;top:447.0px;width:1.4px;height:1.4px;background:#3a4a9a;"></div>
<div style="left:145px;top:449.7px;width:1.4px;height:1.4px;background:#3a4a9a;"></div>
<div style="left:145px;top:452.4px;width:1.4px;height:1.4px;background:#3a4a9a;"></div>
<span class="t s" style="top:445.80px;font-size:8.25px;line-height:12px;letter-spacing:0.102px;left:150px;color:#000;font-weight:bold;">Hiển thị cột:</span>
<div style="left:203.8px;top:446.3px;width:9px;height:9px;background:#fff;border:1px solid #4c4c4c;"></div>
<span class="t s" style="top:445.80px;font-size:8.25px;line-height:12px;left:216.5px;transform-origin:0 50%;transform:scaleX(0.9419);color:#111;">Kích thuớc</span>
<div style="left:261px;top:446.3px;width:9px;height:9px;background:#fff;border:1px solid #4c4c4c;"></div>
<svg class="a" style="left:262px;top:447.5px" width="7" height="7" viewBox="0 0 7 7" ><path d="M1 3.6L2.9 5.5L6.2 1.4" fill="none" stroke="#111" stroke-width="1.1"/></svg>
<span class="t s" style="top:445.80px;font-size:8.25px;line-height:12px;left:274px;transform-origin:0 50%;transform:scaleX(0.9055);color:#111;">Đơn giá</span>
<div style="left:308px;top:446.3px;width:9px;height:9px;background:#fff;border:1px solid #4c4c4c;"></div>
<svg class="a" style="left:309px;top:447.5px" width="7" height="7" viewBox="0 0 7 7" ><path d="M1 3.6L2.9 5.5L6.2 1.4" fill="none" stroke="#111" stroke-width="1.1"/></svg>
<span class="t s" style="top:445.80px;font-size:8.25px;line-height:12px;left:321px;color:#111;">Thành tiền</span>
<div style="left:162px;top:322.5px;width:597px;height:14.5px;background:#ececec;"></div>
<div style="left:161.5px;top:321.5px;width:768.0px;height:1px;background:#626262;"></div>
<span class="t r" style="top:323.00px;font-size:10.5px;line-height:14px;right:266px;color:#1c1cf0;font-weight:bold;">TỔNG HẠNG MỤC</span>
<div style="left:143px;top:456.7px;width:881px;height:1px;background:#b9b7ad;"></div>
<div style="left:143px;top:457.5px;width:881px;height:14.5px;background:#dcdcdc;"></div>
<div style="left:143px;top:457.5px;width:69px;height:14.8px;background:#fff;"></div>
<div style="left:212px;top:457.5px;width:67px;height:14px;background:#f0f0f0;"></div>
<div style="left:279px;top:458px;width:0.8px;height:13.5px;background:#dcdcdc;"></div>
<div style="left:279.5px;top:457.5px;width:67px;height:14px;background:#f0f0f0;"></div>
<span class="t s" style="top:458.80px;font-size:8.25px;line-height:12px;left:164.5px;transform-origin:0 50%;transform:scaleX(0.8899);color:#111;">Vật liệu</span>
<span class="t s" style="top:459.80px;font-size:8.25px;line-height:12px;left:226.5px;transform-origin:0 50%;transform:scaleX(0.9397);color:#111;">Nhân công</span>
<span class="t s" style="top:459.80px;font-size:8.25px;line-height:12px;left:307px;color:#111;">Máy thi công</span>
<span class="t s" style="top:459.10px;font-size:8.25px;line-height:12px;left:839px;transform-origin:0 50%;transform:scaleX(0.9245);color:#111;">Chênh lệch đơn giá: VL: 0   VLp: 0   NC: 0   M: 0</span>
<svg class="a" style="left:1011.5px;top:460.5px" width="7" height="8" viewBox="0 0 7 8" ><path d="M2.2 0.8H4.8V4.4H2.2Z" fill="none" stroke="#333" stroke-width="0.7"/><path d="M0.8 4.6H6.2M3.5 4.6V7.4" stroke="#333" stroke-width="0.7"/></svg>
<div style="left:143px;top:472.3px;width:867.5px;height:123px;background:#fff;"></div>
<div style="left:143px;top:472.3px;width:867.5px;height:14.2px;background:#efebdd;border-bottom:1px solid #959385;border-top:1px solid #b4b2a4;"></div>
<div style="left:143px;top:486.5px;width:18.5px;height:108.5px;background:#efebdd;"></div>
<div style="left:143px;top:500.25px;width:18.5px;height:1px;background:#9e9b8c;"></div>
<div style="left:161.5px;top:500.25px;width:847px;height:1px;background:repeating-linear-gradient(90deg,#b2b2b2 0 1.5px,transparent 1.5px 2.5px);"></div>
<span class="t s" style="top:487.65px;font-size:10px;line-height:14px;left:152px;transform:translateX(-50%) ;color:#2a2a2a;transform:translateX(-50%) scaleX(.9);">1</span>
<div style="left:143px;top:514.5px;width:18.5px;height:1px;background:#9e9b8c;"></div>
<div style="left:161.5px;top:514.5px;width:847px;height:1px;background:repeating-linear-gradient(90deg,#b2b2b2 0 1.5px,transparent 1.5px 2.5px);"></div>
<span class="t s" style="top:501.90px;font-size:10px;line-height:14px;left:152px;transform:translateX(-50%) ;color:#2a2a2a;transform:translateX(-50%) scaleX(.9);">2</span>
<div style="left:143px;top:528.5px;width:18.5px;height:1px;background:#9e9b8c;"></div>
<div style="left:161.5px;top:528.5px;width:847px;height:1px;background:repeating-linear-gradient(90deg,#b2b2b2 0 1.5px,transparent 1.5px 2.5px);"></div>
<span class="t s" style="top:515.90px;font-size:10px;line-height:14px;left:152px;transform:translateX(-50%) ;color:#2a2a2a;transform:translateX(-50%) scaleX(.9);">3</span>
<div style="left:143px;top:542.5px;width:18.5px;height:1px;background:#9e9b8c;"></div>
<div style="left:161.5px;top:542.5px;width:847px;height:1px;background:repeating-linear-gradient(90deg,#b2b2b2 0 1.5px,transparent 1.5px 2.5px);"></div>
<span class="t s" style="top:529.90px;font-size:10px;line-height:14px;left:152px;transform:translateX(-50%) ;color:#2a2a2a;transform:translateX(-50%) scaleX(.9);">4</span>
<div style="left:143px;top:557.0px;width:18.5px;height:1px;background:#9e9b8c;"></div>
<div style="left:161.5px;top:557.0px;width:847px;height:1px;background:repeating-linear-gradient(90deg,#b2b2b2 0 1.5px,transparent 1.5px 2.5px);"></div>
<span class="t s" style="top:544.40px;font-size:10px;line-height:14px;left:152px;transform:translateX(-50%) ;color:#2a2a2a;transform:translateX(-50%) scaleX(.9);">5</span>
<div style="left:143px;top:571.25px;width:18.5px;height:1px;background:#9e9b8c;"></div>
<div style="left:161.5px;top:571.25px;width:847px;height:1px;background:repeating-linear-gradient(90deg,#b2b2b2 0 1.5px,transparent 1.5px 2.5px);"></div>
<span class="t s" style="top:558.65px;font-size:10px;line-height:14px;left:152px;transform:translateX(-50%) ;color:#2a2a2a;transform:translateX(-50%) scaleX(.9);">6</span>
<div style="left:143px;top:585.5px;width:18.5px;height:1px;background:#9e9b8c;"></div>
<div style="left:161.5px;top:585.5px;width:847px;height:1px;background:repeating-linear-gradient(90deg,#b2b2b2 0 1.5px,transparent 1.5px 2.5px);"></div>
<span class="t s" style="top:572.90px;font-size:10px;line-height:14px;left:152px;transform:translateX(-50%) ;color:#2a2a2a;transform:translateX(-50%) scaleX(.9);">7</span>
<div style="left:143px;top:599.5px;width:18.5px;height:1px;background:#9e9b8c;"></div>
<div style="left:161.5px;top:599.5px;width:847px;height:1px;background:repeating-linear-gradient(90deg,#b2b2b2 0 1.5px,transparent 1.5px 2.5px);"></div>
<span class="t s" style="top:586.90px;font-size:10px;line-height:14px;left:152px;transform:translateX(-50%) ;color:#2a2a2a;transform:translateX(-50%) scaleX(.9);">8</span>
<div style="left:161.0px;top:472.3px;width:1px;height:123px;background:#969696;"></div>
<div style="left:185.0px;top:472.3px;width:1px;height:123px;background:#969696;"></div>
<div style="left:244.5px;top:472.3px;width:1px;height:123px;background:#969696;"></div>
<div style="left:458.8px;top:472.3px;width:1px;height:123px;background:#969696;"></div>
<div style="left:497.5px;top:472.3px;width:1px;height:123px;background:#969696;"></div>
<div style="left:546.8px;top:472.3px;width:1px;height:123px;background:#969696;"></div>
<div style="left:609.0px;top:472.3px;width:1px;height:123px;background:#969696;"></div>
<div style="left:671.3px;top:472.3px;width:1px;height:123px;background:#969696;"></div>
<div style="left:710.0px;top:472.3px;width:1px;height:123px;background:#969696;"></div>
<span class="t s" style="top:473.00px;font-size:10.5px;line-height:14px;left:173.5px;transform:translateX(-50%) scaleX(0.8315);color:#2a2a2a;">STT</span>
<span class="t s" style="top:473.00px;font-size:10.5px;line-height:14px;left:215.5px;transform:translateX(-50%) scaleX(0.8893);color:#4a3040;">Mã VL</span>
<span class="t s" style="top:473.80px;font-size:9px;line-height:13px;left:352px;transform:translateX(-50%) ;color:#222;">Tên vật tư</span>
<span class="t r" style="top:485.30px;font-size:11px;line-height:15px;left:173.5px;transform:translateX(-50%) ;color:#111;">1</span>
<span class="t r" style="top:485.30px;font-size:11px;line-height:15px;letter-spacing:0.000px;left:188.5px;color:#111;">01431</span>
<span class="t r" style="top:485.30px;font-size:11px;line-height:15px;letter-spacing:0.041px;left:249px;color:#111;">Bulông M16x330</span>
<span class="t r" style="top:485.30px;font-size:11px;line-height:15px;left:478.8px;transform:translateX(-50%) ;color:#111;">cái</span>
<span class="t r" style="top:485.30px;font-size:11px;line-height:15px;letter-spacing:0.034px;right:478px;color:#111;">78,0000</span>
<span class="t r" style="top:485.30px;font-size:11px;line-height:15px;letter-spacing:0.141px;right:416px;color:#111;">6.800,0</span>
<span class="t r" style="top:485.30px;font-size:11px;line-height:15px;letter-spacing:0.141px;right:354px;color:#111;">6.800,0</span>
<span class="t r" style="top:485.30px;font-size:11px;line-height:15px;left:690.5px;transform:translateX(-50%) ;color:#111;">C</span>
<span class="t r" style="top:499.55px;font-size:11px;line-height:15px;left:173.5px;transform:translateX(-50%) ;color:#111;">2</span>
<span class="t r" style="top:499.55px;font-size:11px;line-height:15px;letter-spacing:0.000px;left:188.5px;color:#111;">06582</span>
<span class="t r" style="top:499.55px;font-size:11px;line-height:15px;left:249px;transform-origin:0 50%;transform:scaleX(0.9663);color:#111;">Gỗ</span>
<span class="t r" style="top:499.55px;font-size:11px;line-height:15px;left:478.8px;transform:translateX(-50%) ;color:#111;">m3</span>
<span class="t r" style="top:499.55px;font-size:11px;line-height:15px;letter-spacing:0.042px;right:478px;color:#111;">1,1200</span>
<span class="t r" style="top:499.55px;font-size:11px;line-height:15px;letter-spacing:0.113px;right:416px;color:#111;">5.800.000,0</span>
<span class="t r" style="top:499.55px;font-size:11px;line-height:15px;letter-spacing:0.113px;right:354px;color:#111;">5.800.000,0</span>
<span class="t r" style="top:499.55px;font-size:11px;line-height:15px;left:690.5px;transform:translateX(-50%) ;color:#111;">C</span>
<span class="t r" style="top:513.80px;font-size:11px;line-height:15px;left:173.5px;transform:translateX(-50%) ;color:#111;">3</span>
<span class="t r" style="top:513.80px;font-size:11px;line-height:15px;letter-spacing:0.000px;left:188.5px;color:#111;">05675</span>
<span class="t r" style="top:513.80px;font-size:11px;line-height:15px;letter-spacing:0.027px;left:249px;color:#111;">Đinh mũ</span>
<span class="t r" style="top:513.80px;font-size:11px;line-height:15px;left:478.8px;transform:translateX(-50%) ;color:#111;">kg</span>
<span class="t r" style="top:513.80px;font-size:11px;line-height:15px;letter-spacing:0.042px;right:478px;color:#111;">1,1400</span>
<span class="t r" style="top:513.80px;font-size:11px;line-height:15px;letter-spacing:0.062px;right:416px;color:#111;">19.000,0</span>
<span class="t r" style="top:513.80px;font-size:11px;line-height:15px;letter-spacing:0.062px;right:354px;color:#111;">19.000,0</span>
<span class="t r" style="top:513.80px;font-size:11px;line-height:15px;left:690.5px;transform:translateX(-50%) ;color:#111;">C</span>
<span class="t r" style="top:527.80px;font-size:11px;line-height:15px;left:173.5px;transform:translateX(-50%) ;color:#111;">4</span>
<span class="t r" style="top:527.80px;font-size:11px;line-height:15px;letter-spacing:0.000px;left:188.5px;color:#111;">05665</span>
<span class="t r" style="top:527.80px;font-size:11px;line-height:15px;letter-spacing:0.093px;left:249px;color:#111;">Đinh đỉa f6x120</span>
<span class="t r" style="top:527.80px;font-size:11px;line-height:15px;left:478.8px;transform:translateX(-50%) ;color:#111;">cái</span>
<span class="t r" style="top:527.80px;font-size:11px;line-height:15px;letter-spacing:0.034px;right:478px;color:#111;">49,0000</span>
<span class="t r" style="top:527.80px;font-size:11px;line-height:15px;letter-spacing:0.141px;right:416px;color:#111;">2.500,0</span>
<span class="t r" style="top:527.80px;font-size:11px;line-height:15px;letter-spacing:0.141px;right:354px;color:#111;">2.500,0</span>
<span class="t r" style="top:527.80px;font-size:11px;line-height:15px;left:690.5px;transform:translateX(-50%) ;color:#111;">C</span>
<div style="left:1010.5px;top:472.3px;width:13.5px;height:123px;background:#f0f0f0;"></div>
<div style="left:1011.8px;top:485px;width:10px;height:11.5px;background:#c2c2c2;"></div>
<svg class="a" style="left:1013.7px;top:476.3px" width="7" height="5" viewBox="0 0 7 5" ><path d="M0.8 4.2L3.5 1.2L6.2 4.2" fill="none" stroke="#444" stroke-width="1.1"/></svg>
<svg class="a" style="left:1013.7px;top:586.3px" width="7" height="5" viewBox="0 0 7 5" ><path d="M0.8 0.8L3.5 3.8L6.2 0.8" fill="none" stroke="#444" stroke-width="1.1"/></svg>
<div style="left:0px;top:595px;width:1024px;height:16.3px;background:#ece9d8;border-top:1px solid #a9a798;"></div>
<span class="t s" style="top:599.10px;font-size:8.25px;line-height:12px;left:5px;transform-origin:0 50%;transform:scaleX(0.9011);color:#111;">Ready</span>
<div style="left:643px;top:596px;width:220px;height:15px;background:#f0f0f0;"></div>
<svg class="a" style="left:645.5px;top:598.5px" width="10" height="10" viewBox="0 0 10 10" ><circle cx="5" cy="5" r="4.8" fill="#3fae49"/><path d="M2.6 5.4A2.6 2.6 0 1 1 5 7.6" fill="none" stroke="#fff" stroke-width="1.2"/><path d="M3.4 8.8L5.6 7.6L3.8 6Z" fill="#fff"/></svg>
<span class="t s" style="top:598.80px;font-size:8.25px;line-height:12px;letter-spacing:0.227px;left:658px;color:#111;">Thông báo</span>
<svg class="a" style="left:710.5px;top:598.5px" width="10" height="10" viewBox="0 0 10 10" ><rect x="0.4" y="0.4" width="9.2" height="9.2" rx="1.6" fill="#1c7fe0"/><circle cx="5" cy="5" r="3.2" fill="#fff"/><path d="M2.8 5H7.2M3.6 4L2.6 5L3.6 6M6.4 4L7.4 5L6.4 6" fill="none" stroke="#1c7fe0" stroke-width="0.8"/></svg>
<span class="t s" style="top:598.80px;font-size:8.25px;line-height:12px;letter-spacing:0.008px;left:724.5px;color:#111;">Hỗ trợ từ xa</span>
<span class="t r" style="top:595.00px;font-size:10.5px;line-height:14px;left:955.5px;transform-origin:0 50%;transform:scaleX(0.9565);color:#1a1aee;text-decoration:underline;">Góp ý, báo lỗi...</span>
<div style="left:0px;top:611.3px;width:1024px;height:28.7px;background:#0b0c12;"></div>
<div style="left:0px;top:611.3px;width:34px;height:28.7px;background:#000;"></div>
<svg class="a" style="left:11px;top:619.5px" width="12.5" height="12" viewBox="0 0 12.5 12" ><path d="M0 1.7L5.3 1V5.7H0ZM6.1 0.9L12.5 0V5.7H6.1ZM0 6.4H5.3V11L0 10.3ZM6.1 6.4H12.5V12L6.1 11.1Z" fill="#fff"/></svg>
<div style="left:34px;top:611.3px;width:245px;height:28.7px;background:#3b3b3b;"></div>
<svg class="a" style="left:41px;top:618.5px" width="15" height="15" viewBox="0 0 15 15" ><circle cx="7.5" cy="7.5" r="5.8" fill="none" stroke="#f0f0f0" stroke-width="1.9"/></svg>
<span class="t s" style="top:618.50px;font-size:11.3px;line-height:15px;letter-spacing:0.166px;left:63px;color:#bdbdbd;">Type here to search</span>
<svg class="a" style="left:260.5px;top:619.5px" width="8" height="13" viewBox="0 0 8 13" ><rect x="2.4" y="0.6" width="3.2" height="7" rx="1.6" fill="none" stroke="#d0d0d0" stroke-width="0.9"/><path d="M0.8 6.2A3.2 3.2 0 0 0 7.2 6.2M4 9.6V12M2.2 12H5.8" fill="none" stroke="#d0d0d0" stroke-width="0.8"/></svg>
<svg class="a" style="left:288px;top:620px" width="15.5" height="11" viewBox="0 0 15.5 11" ><rect x="3.2" y="0.8" width="9" height="9.4" fill="none" stroke="#f0f0f0" stroke-width="1"/><path d="M1.8 2.4H0.6V8.6H1.8M13.7 2.4H14.9V8.6H13.7" fill="none" stroke="#f0f0f0" stroke-width="0.9"/></svg>
<svg class="a" style="left:324px;top:619px" width="16" height="13.5" viewBox="0 0 16 13.5" ><path d="M0.5 1H6L7.2 2.4H15.5V12H0.5Z" fill="#f4c64e"/><path d="M0.5 4.2H15.5V12.8H0.5Z" fill="#fbdc7c"/><path d="M4 8.4H12V13H4Z" fill="#3f9ae8"/><path d="M5.6 10.2H10.4V13H5.6Z" fill="#fbdc7c"/></svg>
<svg class="a" style="left:359px;top:618.5px" width="16" height="14" viewBox="0 0 16 14" ><rect x="7" y="1.4" width="8.6" height="11.2" fill="#fff" stroke="#1f7244" stroke-width="0.8"/><path d="M9.8 1.4V12.6M12.6 1.4V12.6M7 4.2H15.6M7 7H15.6M7 9.8H15.6" stroke="#1f7244" stroke-width="0.7"/><path d="M0.4 1.6L9 0.2V13.8L0.4 12.4Z" fill="#1f7244"/><text x="4.6" y="10" font-size="8.5" font-family="Liberation Sans, sans-serif" font-weight="bold" text-anchor="middle" fill="#fff">X</text></svg>
<svg class="a" style="left:394px;top:618.5px" width="16" height="14" viewBox="0 0 16 14" ><rect x="7" y="1.4" width="8.6" height="11.2" fill="#fff" stroke="#2a5699" stroke-width="0.8"/><path d="M10 4H14.4M10 6H14.4M10 8H14.4M10 10H14.4" stroke="#2a5699" stroke-width="0.8"/><path d="M0.4 1.6L9 0.2V13.8L0.4 12.4Z" fill="#2a5699"/><text x="4.7" y="10" font-size="7.6" font-family="Liberation Sans, sans-serif" font-weight="bold" text-anchor="middle" fill="#fff">W</text></svg>
<div style="left:387.7px;top:638px;width:28.5px;height:2px;background:#76b9ed;"></div>
<svg class="a" style="left:428.5px;top:617.5px" width="16" height="16" viewBox="0 0 16 16" ><circle cx="8" cy="8.4" r="7.2" fill="#f6901e"/><path d="M8 1.2A7.2 7.2 0 0 1 15.2 8.4A7.2 7.2 0 0 1 8 15.6C12 13.6 13 7 8 1.2Z" fill="#e0382a"/><circle cx="7.6" cy="8.6" r="3.9" fill="#3a6ad8"/><path d="M3 5.2C5 3.4 8 4.6 8.6 6.6C7 6 5.6 6.8 5.8 8.4C6 10 8 10.6 9.4 9.8C8.8 12 5.4 12.6 3.6 10.6Z" fill="#f8b43a"/><path d="M10.6 1.8L13.4 0.8L13 4Z" fill="#f8c84a"/></svg>
<svg class="a" style="left:463.5px;top:617.5px" width="16" height="16" viewBox="0 0 16 16" ><circle cx="8" cy="8" r="7.6" fill="#e33b2e"/><path d="M8 8L1.4 4.2A7.6 7.6 0 0 0 8 15.6L11.6 9.6Z" fill="#2da94f"/><path d="M8 8L11.6 9.6L8 15.6A7.6 7.6 0 0 0 14.8 4.6H8Z" fill="#fbc116"/><circle cx="8" cy="8" r="3.5" fill="#fff"/><circle cx="8" cy="8" r="2.7" fill="#4a8af4"/></svg>
<div style="left:457px;top:638px;width:27px;height:2px;background:#76b9ed;"></div>
<div style="left:489.5px;top:611.3px;width:33.5px;height:28.7px;background:#34353a;"></div>
<div style="left:489.5px;top:638px;width:33.5px;height:2px;background:#8ac4f0;"></div>
<svg class="a" style="left:498px;top:618px" width="16" height="16" viewBox="0 0 16 16" ><rect x="0.8" y="0.8" width="14.4" height="14.4" fill="#f2f6f2" stroke="#3c7c46" stroke-width="1.6"/><text x="8" y="13.2" font-size="14.5" font-family="Liberation Sans, sans-serif" font-weight="bold" text-anchor="middle" fill="#2f6f3a">Σ</text></svg>
<svg class="a" style="left:532.5px;top:617px" width="18" height="17" viewBox="0 0 18 17" ><ellipse cx="7.6" cy="10" rx="7" ry="5.6" fill="#e8e2d2" stroke="#8a8474" stroke-width="0.6"/><circle cx="4" cy="9" r="1.3" fill="#3a7ad8"/><circle cx="6.4" cy="6.8" r="1.3" fill="#e0382a"/><circle cx="9.6" cy="7" r="1.3" fill="#3aa84a"/><circle cx="5.4" cy="12.4" r="1.3" fill="#f4c21a"/><path d="M16.6 0.8L9.4 11.6L8.4 13.8L10.4 12.6L17.4 1.6Z" fill="#d88a3a" stroke="#8a5a1a" stroke-width="0.4"/></svg>
<div style="left:527px;top:638px;width:28px;height:2px;background:#76b9ed;"></div>
<svg class="a" style="left:568px;top:618px" width="16.5" height="16" viewBox="0 0 16.5 16" ><rect x="0.6" y="0.6" width="15.3" height="14.8" fill="#0f1c4a" stroke="#8ab0ff" stroke-width="1.1"/></svg>
<span class="t s" style="top:620.80px;font-size:8.5px;line-height:12px;left:576.2px;transform:translateX(-50%) ;color:#9ec2ff;font-weight:bold;">Ps</span>
<div style="left:562px;top:638px;width:28px;height:2px;background:#76b9ed;"></div>
<div style="left:1020px;top:611.3px;width:1px;height:28.7px;background:#55565a;"></div>
<svg class="a" style="left:851px;top:621.5px" width="10" height="7" viewBox="0 0 10 7" ><path d="M0.8 6L5 1.6L9.2 6" fill="none" stroke="#f0f0f0" stroke-width="1.1"/></svg>
<svg class="a" style="left:866.5px;top:620.5px" width="13" height="9" viewBox="0 0 13 9" ><rect x="3.4" y="2.2" width="8" height="5" fill="none" stroke="#f0f0f0" stroke-width="0.9"/><rect x="11.6" y="3.6" width="1" height="2.2" fill="#f0f0f0"/><path d="M1.6 0.4V3.4M0.4 1.6H2.8M1.6 3.4V8.4H3" fill="none" stroke="#f0f0f0" stroke-width="0.8"/><rect x="4.4" y="3.2" width="2.6" height="3" fill="#f0f0f0"/></svg>
<svg class="a" style="left:885.5px;top:620px" width="11" height="10" viewBox="0 0 11 10" ><path d="M0.8 9.2A8.4 8.4 0 0 1 9.2 0.8" fill="none" stroke="#e0e0e0" stroke-width="0.9"/><path d="M3.2 9.2A6 6 0 0 1 9.2 3.2" fill="none" stroke="#e0e0e0" stroke-width="0.9"/><path d="M5.6 9.2A3.6 3.6 0 0 1 9.2 5.6" fill="none" stroke="#e0e0e0" stroke-width="0.9"/><circle cx="8.8" cy="8.8" r="1.1" fill="#fff"/></svg>
<svg class="a" style="left:899.5px;top:620px" width="13" height="10" viewBox="0 0 13 10" ><path d="M0.8 3.4H2.8L5.4 0.8V9.2L2.8 6.6H0.8Z" fill="none" stroke="#f0f0f0" stroke-width="0.8"/><path d="M7 3.2A2.6 2.6 0 0 1 7 6.8M8.6 1.8A4.6 4.6 0 0 1 8.6 8.2M10.4 0.6A6.4 6.4 0 0 1 10.4 9.4" fill="none" stroke="#e0e0e0" stroke-width="0.7"/></svg>
<span class="t s" style="top:619.80px;font-size:8.5px;line-height:12px;left:919.7px;transform-origin:0 50%;transform:scaleX(0.8957);color:#f0f0f0;">ENG</span>
<span class="t s" style="top:613.80px;font-size:8.5px;line-height:12px;left:963.5px;transform:translateX(-50%) scaleX(0.9319);color:#f0f0f0;">8:26 PM</span>
<span class="t s" style="top:626.40px;font-size:8.5px;line-height:12px;left:964px;transform:translateX(-50%) scaleX(0.9649);color:#f0f0f0;">12/2/2017</span>
<svg class="a" style="left:994.5px;top:619px" width="19" height="15" viewBox="0 0 19 15" ><path d="M0.8 0.8H12V9H4.6L2.6 11V9H0.8Z" fill="#f4f4f4"/><path d="M2.6 3H10.2M2.6 5H10.2M2.6 7H7" stroke="#0b0c12" stroke-width="0.7"/><circle cx="12" cy="9.4" r="4.2" fill="#2a2a2e" stroke="#c8c8c8" stroke-width="0.8"/></svg>
<span class="t s" style="top:623.80px;font-size:7px;line-height:11px;left:1006.5px;transform:translateX(-50%) ;color:#fff;font-weight:bold;">1</span>
<div style="left:319px;top:124.3px;width:384.6px;height:361.5px;background:#fff;border:1px solid #4f94d4;box-shadow:0 1px 9px rgba(0,0,0,0.38);"></div>
<span class="t s" style="top:125.20px;font-size:9.2px;line-height:13px;left:322.3px;transform-origin:0 50%;transform:scaleX(0.9380);color:#111;">Tải đơn giá</span>
<svg class="a" style="left:690.5px;top:128px" width="8" height="8" viewBox="0 0 8 8" ><path d="M0.6 0.6L7.4 7.4M7.4 0.6L0.6 7.4" stroke="#222" stroke-width="0.85"/></svg>
<span class="t r b" style="top:144.90px;font-size:15px;line-height:19px;left:328.3px;transform-origin:0 50%;transform:scaleX(0.9707);color:#777;">Tải đơn giá từ Internet</span>
<div style="left:320px;top:172.0px;width:382.6px;height:1px;background:#9a9a9a;"></div>
<div style="left:323.0px;top:172.5px;width:1px;height:282.5px;background:#e2e2e2;"></div>
<div style="left:323.5px;top:172.5px;width:367.5px;height:282.5px;overflow:hidden;">
<div style="left:0px;top:17.97px;width:367.5px;height:1px;background:#d2d2d2;"></div>
<svg class="a" style="left:6px;top:4.0px" width="12.5" height="12.5" viewBox="0 0 12.5 12.5" ><path d="M0.7 2.4V9.4C0.7 10.5 2.7 11.2 5 11.2C7.3 11.2 9.3 10.5 9.3 9.4V2.4" fill="#e4eaf0" stroke="#98a8b8" stroke-width="0.8"/><ellipse cx="5" cy="2.4" rx="4.3" ry="1.7" fill="#f2f5f8" stroke="#98a8b8" stroke-width="0.8"/><path d="M0.7 5.8C0.7 6.9 2.7 7.6 5 7.6C7.3 7.6 9.3 6.9 9.3 5.8" fill="none" stroke="#b4c0cc" stroke-width="0.8"/><path d="M9.6 3.8L6.6 8H8.6L7 11.8L12 6.8H9.8L11.4 3.8Z" fill="#f7c548" stroke="#e8a224" stroke-width="0.5"/></svg>
<span class="t r" style="top:1.50px;font-size:11px;line-height:15px;left:24.2px;transform-origin:0 50%;transform:scaleX(0.9239);color:#111;">An Giang</span>
<div style="left:321.8px;top:3.0px;width:39.3px;height:12.6px;background:#e1e1e1;border:1px solid #adadad;"></div>
<span class="t s" style="top:3.80px;font-size:8.25px;line-height:12px;left:341.5px;transform:translateX(-50%) scaleX(0.8679);color:#111;">Tải về</span>
<div style="left:0px;top:36.44px;width:367.5px;height:1px;background:#d2d2d2;"></div>
<svg class="a" style="left:6px;top:22.47px" width="12.5" height="12.5" viewBox="0 0 12.5 12.5" ><path d="M0.7 2.4V9.4C0.7 10.5 2.7 11.2 5 11.2C7.3 11.2 9.3 10.5 9.3 9.4V2.4" fill="#e4eaf0" stroke="#98a8b8" stroke-width="0.8"/><ellipse cx="5" cy="2.4" rx="4.3" ry="1.7" fill="#f2f5f8" stroke="#98a8b8" stroke-width="0.8"/><path d="M0.7 5.8C0.7 6.9 2.7 7.6 5 7.6C7.3 7.6 9.3 6.9 9.3 5.8" fill="none" stroke="#b4c0cc" stroke-width="0.8"/><path d="M9.6 3.8L6.6 8H8.6L7 11.8L12 6.8H9.8L11.4 3.8Z" fill="#f7c548" stroke="#e8a224" stroke-width="0.5"/></svg>
<span class="t r" style="top:19.97px;font-size:11px;line-height:15px;left:24.2px;transform-origin:0 50%;transform:scaleX(0.9951);color:#111;">Bắc Kạn</span>
<span class="t r" style="top:20.27px;font-size:11px;line-height:15px;left:123.8px;transform-origin:0 50%;transform:scaleX(0.9851);color:#1f8f2f;">(Đã có)</span>
<div style="left:321.8px;top:21.47px;width:39.3px;height:12.6px;background:#e1e1e1;border:1px solid #adadad;"></div>
<span class="t s" style="top:22.27px;font-size:8.25px;line-height:12px;left:341.5px;transform:translateX(-50%) scaleX(0.8679);color:#111;">Tải về</span>
<div style="left:0px;top:54.91px;width:367.5px;height:1px;background:#d2d2d2;"></div>
<svg class="a" style="left:6px;top:40.94px" width="12.5" height="12.5" viewBox="0 0 12.5 12.5" ><path d="M0.7 2.4V9.4C0.7 10.5 2.7 11.2 5 11.2C7.3 11.2 9.3 10.5 9.3 9.4V2.4" fill="#e4eaf0" stroke="#98a8b8" stroke-width="0.8"/><ellipse cx="5" cy="2.4" rx="4.3" ry="1.7" fill="#f2f5f8" stroke="#98a8b8" stroke-width="0.8"/><path d="M0.7 5.8C0.7 6.9 2.7 7.6 5 7.6C7.3 7.6 9.3 6.9 9.3 5.8" fill="none" stroke="#b4c0cc" stroke-width="0.8"/><path d="M9.6 3.8L6.6 8H8.6L7 11.8L12 6.8H9.8L11.4 3.8Z" fill="#f7c548" stroke="#e8a224" stroke-width="0.5"/></svg>
<span class="t r" style="top:38.44px;font-size:11px;line-height:15px;left:24.2px;transform-origin:0 50%;transform:scaleX(0.9372);color:#111;">Bắc Giang</span>
<span class="t r" style="top:38.74px;font-size:11px;line-height:15px;left:123.8px;transform-origin:0 50%;transform:scaleX(0.9851);color:#1f8f2f;">(Đã có)</span>
<div style="left:321.8px;top:39.94px;width:39.3px;height:12.6px;background:#e1e1e1;border:1px solid #adadad;"></div>
<span class="t s" style="top:40.74px;font-size:8.25px;line-height:12px;left:341.5px;transform:translateX(-50%) scaleX(0.8679);color:#111;">Tải về</span>
<div style="left:0px;top:73.38px;width:367.5px;height:1px;background:#d2d2d2;"></div>
<svg class="a" style="left:6px;top:59.41px" width="12.5" height="12.5" viewBox="0 0 12.5 12.5" ><path d="M0.7 2.4V9.4C0.7 10.5 2.7 11.2 5 11.2C7.3 11.2 9.3 10.5 9.3 9.4V2.4" fill="#e4eaf0" stroke="#98a8b8" stroke-width="0.8"/><ellipse cx="5" cy="2.4" rx="4.3" ry="1.7" fill="#f2f5f8" stroke="#98a8b8" stroke-width="0.8"/><path d="M0.7 5.8C0.7 6.9 2.7 7.6 5 7.6C7.3 7.6 9.3 6.9 9.3 5.8" fill="none" stroke="#b4c0cc" stroke-width="0.8"/><path d="M9.6 3.8L6.6 8H8.6L7 11.8L12 6.8H9.8L11.4 3.8Z" fill="#f7c548" stroke="#e8a224" stroke-width="0.5"/></svg>
<span class="t r" style="top:56.91px;font-size:11px;line-height:15px;left:24.2px;transform-origin:0 50%;transform:scaleX(0.9596);color:#111;">Bạc Liêu</span>
<div style="left:321.8px;top:58.41px;width:39.3px;height:12.6px;background:#e1e1e1;border:1px solid #adadad;"></div>
<span class="t s" style="top:59.21px;font-size:8.25px;line-height:12px;left:341.5px;transform:translateX(-50%) scaleX(0.8679);color:#111;">Tải về</span>
<div style="left:0px;top:73.88px;width:367.5px;height:18.47px;background:#f2f2f2;"></div>
<div style="left:0px;top:91.85px;width:367.5px;height:1px;background:#d2d2d2;"></div>
<svg class="a" style="left:6px;top:77.88px" width="12.5" height="12.5" viewBox="0 0 12.5 12.5" ><path d="M0.7 2.4V9.4C0.7 10.5 2.7 11.2 5 11.2C7.3 11.2 9.3 10.5 9.3 9.4V2.4" fill="#e4eaf0" stroke="#98a8b8" stroke-width="0.8"/><ellipse cx="5" cy="2.4" rx="4.3" ry="1.7" fill="#f2f5f8" stroke="#98a8b8" stroke-width="0.8"/><path d="M0.7 5.8C0.7 6.9 2.7 7.6 5 7.6C7.3 7.6 9.3 6.9 9.3 5.8" fill="none" stroke="#b4c0cc" stroke-width="0.8"/><path d="M9.6 3.8L6.6 8H8.6L7 11.8L12 6.8H9.8L11.4 3.8Z" fill="#f7c548" stroke="#e8a224" stroke-width="0.5"/></svg>
<span class="t r" style="top:75.38px;font-size:11px;line-height:15px;left:24.2px;transform-origin:0 50%;transform:scaleX(0.9627);color:#111;">Bắc Ninh</span>
<span class="t r" style="top:75.68px;font-size:11px;line-height:15px;left:123.8px;transform-origin:0 50%;transform:scaleX(0.9851);color:#1f8f2f;">(Đã có)</span>
<span class="t s" style="top:76.68px;font-size:8.6px;line-height:13px;letter-spacing:0.093px;left:289px;color:#1f8f2f;font-weight:bold;">Đã tải về máy.</span>
<div style="left:0px;top:110.32px;width:367.5px;height:1px;background:#d2d2d2;"></div>
<svg class="a" style="left:6px;top:96.35px" width="12.5" height="12.5" viewBox="0 0 12.5 12.5" ><path d="M0.7 2.4V9.4C0.7 10.5 2.7 11.2 5 11.2C7.3 11.2 9.3 10.5 9.3 9.4V2.4" fill="#e4eaf0" stroke="#98a8b8" stroke-width="0.8"/><ellipse cx="5" cy="2.4" rx="4.3" ry="1.7" fill="#f2f5f8" stroke="#98a8b8" stroke-width="0.8"/><path d="M0.7 5.8C0.7 6.9 2.7 7.6 5 7.6C7.3 7.6 9.3 6.9 9.3 5.8" fill="none" stroke="#b4c0cc" stroke-width="0.8"/><path d="M9.6 3.8L6.6 8H8.6L7 11.8L12 6.8H9.8L11.4 3.8Z" fill="#f7c548" stroke="#e8a224" stroke-width="0.5"/></svg>
<span class="t r" style="top:93.85px;font-size:11px;line-height:15px;left:24.2px;transform-origin:0 50%;transform:scaleX(0.9586);color:#111;">Bến Tre</span>
<span class="t r" style="top:94.15px;font-size:11px;line-height:15px;left:123.8px;transform-origin:0 50%;transform:scaleX(0.9851);color:#1f8f2f;">(Đã có)</span>
<div style="left:321.8px;top:95.35px;width:39.3px;height:12.6px;background:#e1e1e1;border:1px solid #adadad;"></div>
<span class="t s" style="top:96.15px;font-size:8.25px;line-height:12px;left:341.5px;transform:translateX(-50%) scaleX(0.8679);color:#111;">Tải về</span>
<div style="left:0px;top:128.79px;width:367.5px;height:1px;background:#d2d2d2;"></div>
<svg class="a" style="left:6px;top:114.82px" width="12.5" height="12.5" viewBox="0 0 12.5 12.5" ><path d="M0.7 2.4V9.4C0.7 10.5 2.7 11.2 5 11.2C7.3 11.2 9.3 10.5 9.3 9.4V2.4" fill="#e4eaf0" stroke="#98a8b8" stroke-width="0.8"/><ellipse cx="5" cy="2.4" rx="4.3" ry="1.7" fill="#f2f5f8" stroke="#98a8b8" stroke-width="0.8"/><path d="M0.7 5.8C0.7 6.9 2.7 7.6 5 7.6C7.3 7.6 9.3 6.9 9.3 5.8" fill="none" stroke="#b4c0cc" stroke-width="0.8"/><path d="M9.6 3.8L6.6 8H8.6L7 11.8L12 6.8H9.8L11.4 3.8Z" fill="#f7c548" stroke="#e8a224" stroke-width="0.5"/></svg>
<span class="t r" style="top:112.32px;font-size:11px;line-height:15px;left:24.2px;transform-origin:0 50%;transform:scaleX(0.9100);color:#111;">Bình Định</span>
<span class="t r" style="top:112.62px;font-size:11px;line-height:15px;left:123.8px;transform-origin:0 50%;transform:scaleX(0.9851);color:#1f8f2f;">(Đã có)</span>
<div style="left:321.8px;top:113.82px;width:39.3px;height:12.6px;background:#e1e1e1;border:1px solid #adadad;"></div>
<span class="t s" style="top:114.62px;font-size:8.25px;line-height:12px;left:341.5px;transform:translateX(-50%) scaleX(0.8679);color:#111;">Tải về</span>
<div style="left:0px;top:147.26px;width:367.5px;height:1px;background:#d2d2d2;"></div>
<svg class="a" style="left:6px;top:133.29px" width="12.5" height="12.5" viewBox="0 0 12.5 12.5" ><path d="M0.7 2.4V9.4C0.7 10.5 2.7 11.2 5 11.2C7.3 11.2 9.3 10.5 9.3 9.4V2.4" fill="#e4eaf0" stroke="#98a8b8" stroke-width="0.8"/><ellipse cx="5" cy="2.4" rx="4.3" ry="1.7" fill="#f2f5f8" stroke="#98a8b8" stroke-width="0.8"/><path d="M0.7 5.8C0.7 6.9 2.7 7.6 5 7.6C7.3 7.6 9.3 6.9 9.3 5.8" fill="none" stroke="#b4c0cc" stroke-width="0.8"/><path d="M9.6 3.8L6.6 8H8.6L7 11.8L12 6.8H9.8L11.4 3.8Z" fill="#f7c548" stroke="#e8a224" stroke-width="0.5"/></svg>
<span class="t r" style="top:130.79px;font-size:11px;line-height:15px;left:24.2px;transform-origin:0 50%;transform:scaleX(0.9276);color:#111;">Bình Dương</span>
<span class="t r" style="top:131.09px;font-size:11px;line-height:15px;left:123.8px;transform-origin:0 50%;transform:scaleX(0.9851);color:#1f8f2f;">(Đã có)</span>
<div style="left:321.8px;top:132.29px;width:39.3px;height:12.6px;background:#e1e1e1;border:1px solid #adadad;"></div>
<span class="t s" style="top:133.09px;font-size:8.25px;line-height:12px;left:341.5px;transform:translateX(-50%) scaleX(0.8679);color:#111;">Tải về</span>
<div style="left:0px;top:165.73px;width:367.5px;height:1px;background:#d2d2d2;"></div>
<svg class="a" style="left:6px;top:151.76px" width="12.5" height="12.5" viewBox="0 0 12.5 12.5" ><path d="M0.7 2.4V9.4C0.7 10.5 2.7 11.2 5 11.2C7.3 11.2 9.3 10.5 9.3 9.4V2.4" fill="#e4eaf0" stroke="#98a8b8" stroke-width="0.8"/><ellipse cx="5" cy="2.4" rx="4.3" ry="1.7" fill="#f2f5f8" stroke="#98a8b8" stroke-width="0.8"/><path d="M0.7 5.8C0.7 6.9 2.7 7.6 5 7.6C7.3 7.6 9.3 6.9 9.3 5.8" fill="none" stroke="#b4c0cc" stroke-width="0.8"/><path d="M9.6 3.8L6.6 8H8.6L7 11.8L12 6.8H9.8L11.4 3.8Z" fill="#f7c548" stroke="#e8a224" stroke-width="0.5"/></svg>
<span class="t r" style="top:149.26px;font-size:11px;line-height:15px;left:24.2px;transform-origin:0 50%;transform:scaleX(0.9385);color:#111;">Bình Phước</span>
<div style="left:321.8px;top:150.76px;width:39.3px;height:12.6px;background:#e1e1e1;border:1px solid #adadad;"></div>
<span class="t s" style="top:151.56px;font-size:8.25px;line-height:12px;left:341.5px;transform:translateX(-50%) scaleX(0.8679);color:#111;">Tải về</span>
<div style="left:0px;top:184.2px;width:367.5px;height:1px;background:#d2d2d2;"></div>
<svg class="a" style="left:6px;top:170.23px" width="12.5" height="12.5" viewBox="0 0 12.5 12.5" ><path d="M0.7 2.4V9.4C0.7 10.5 2.7 11.2 5 11.2C7.3 11.2 9.3 10.5 9.3 9.4V2.4" fill="#e4eaf0" stroke="#98a8b8" stroke-width="0.8"/><ellipse cx="5" cy="2.4" rx="4.3" ry="1.7" fill="#f2f5f8" stroke="#98a8b8" stroke-width="0.8"/><path d="M0.7 5.8C0.7 6.9 2.7 7.6 5 7.6C7.3 7.6 9.3 6.9 9.3 5.8" fill="none" stroke="#b4c0cc" stroke-width="0.8"/><path d="M9.6 3.8L6.6 8H8.6L7 11.8L12 6.8H9.8L11.4 3.8Z" fill="#f7c548" stroke="#e8a224" stroke-width="0.5"/></svg>
<span class="t r" style="top:167.73px;font-size:11px;line-height:15px;left:24.2px;transform-origin:0 50%;transform:scaleX(0.9319);color:#111;">Bình Thuận</span>
<div style="left:321.8px;top:169.23px;width:39.3px;height:12.6px;background:#e1e1e1;border:1px solid #adadad;"></div>
<span class="t s" style="top:170.03px;font-size:8.25px;line-height:12px;left:341.5px;transform:translateX(-50%) scaleX(0.8679);color:#111;">Tải về</span>
<div style="left:0px;top:202.67px;width:367.5px;height:1px;background:#d2d2d2;"></div>
<svg class="a" style="left:6px;top:188.7px" width="12.5" height="12.5" viewBox="0 0 12.5 12.5" ><path d="M0.7 2.4V9.4C0.7 10.5 2.7 11.2 5 11.2C7.3 11.2 9.3 10.5 9.3 9.4V2.4" fill="#e4eaf0" stroke="#98a8b8" stroke-width="0.8"/><ellipse cx="5" cy="2.4" rx="4.3" ry="1.7" fill="#f2f5f8" stroke="#98a8b8" stroke-width="0.8"/><path d="M0.7 5.8C0.7 6.9 2.7 7.6 5 7.6C7.3 7.6 9.3 6.9 9.3 5.8" fill="none" stroke="#b4c0cc" stroke-width="0.8"/><path d="M9.6 3.8L6.6 8H8.6L7 11.8L12 6.8H9.8L11.4 3.8Z" fill="#f7c548" stroke="#e8a224" stroke-width="0.5"/></svg>
<span class="t r" style="top:186.20px;font-size:11px;line-height:15px;left:24.2px;transform-origin:0 50%;transform:scaleX(0.9818);color:#111;">Cà Mau</span>
<div style="left:321.8px;top:187.7px;width:39.3px;height:12.6px;background:#e1e1e1;border:1px solid #adadad;"></div>
<span class="t s" style="top:188.50px;font-size:8.25px;line-height:12px;left:341.5px;transform:translateX(-50%) scaleX(0.8679);color:#111;">Tải về</span>
<div style="left:0px;top:221.14px;width:367.5px;height:1px;background:#d2d2d2;"></div>
<svg class="a" style="left:6px;top:207.17px" width="12.5" height="12.5" viewBox="0 0 12.5 12.5" ><path d="M0.7 2.4V9.4C0.7 10.5 2.7 11.2 5 11.2C7.3 11.2 9.3 10.5 9.3 9.4V2.4" fill="#e4eaf0" stroke="#98a8b8" stroke-width="0.8"/><ellipse cx="5" cy="2.4" rx="4.3" ry="1.7" fill="#f2f5f8" stroke="#98a8b8" stroke-width="0.8"/><path d="M0.7 5.8C0.7 6.9 2.7 7.6 5 7.6C7.3 7.6 9.3 6.9 9.3 5.8" fill="none" stroke="#b4c0cc" stroke-width="0.8"/><path d="M9.6 3.8L6.6 8H8.6L7 11.8L12 6.8H9.8L11.4 3.8Z" fill="#f7c548" stroke="#e8a224" stroke-width="0.5"/></svg>
<span class="t r" style="top:204.67px;font-size:11px;line-height:15px;left:24.2px;transform-origin:0 50%;transform:scaleX(0.9788);color:#111;">Cần Thơ</span>
<div style="left:321.8px;top:206.17px;width:39.3px;height:12.6px;background:#e1e1e1;border:1px solid #adadad;"></div>
<span class="t s" style="top:206.97px;font-size:8.25px;line-height:12px;left:341.5px;transform:translateX(-50%) scaleX(0.8679);color:#111;">Tải về</span>
<div style="left:0px;top:239.60999999999999px;width:367.5px;height:1px;background:#d2d2d2;"></div>
<svg class="a" style="left:6px;top:225.64px" width="12.5" height="12.5" viewBox="0 0 12.5 12.5" ><path d="M0.7 2.4V9.4C0.7 10.5 2.7 11.2 5 11.2C7.3 11.2 9.3 10.5 9.3 9.4V2.4" fill="#e4eaf0" stroke="#98a8b8" stroke-width="0.8"/><ellipse cx="5" cy="2.4" rx="4.3" ry="1.7" fill="#f2f5f8" stroke="#98a8b8" stroke-width="0.8"/><path d="M0.7 5.8C0.7 6.9 2.7 7.6 5 7.6C7.3 7.6 9.3 6.9 9.3 5.8" fill="none" stroke="#b4c0cc" stroke-width="0.8"/><path d="M9.6 3.8L6.6 8H8.6L7 11.8L12 6.8H9.8L11.4 3.8Z" fill="#f7c548" stroke="#e8a224" stroke-width="0.5"/></svg>
<span class="t r" style="top:223.14px;font-size:11px;line-height:15px;left:24.2px;transform-origin:0 50%;transform:scaleX(0.9610);color:#111;">Cao Bằng</span>
<span class="t r" style="top:223.44px;font-size:11px;line-height:15px;left:123.8px;transform-origin:0 50%;transform:scaleX(0.9851);color:#1f8f2f;">(Đã có)</span>
<div style="left:321.8px;top:224.64px;width:39.3px;height:12.6px;background:#e1e1e1;border:1px solid #adadad;"></div>
<span class="t s" style="top:225.44px;font-size:8.25px;line-height:12px;left:341.5px;transform:translateX(-50%) scaleX(0.8679);color:#111;">Tải về</span>
<div style="left:0px;top:258.08px;width:367.5px;height:1px;background:#d2d2d2;"></div>
<svg class="a" style="left:6px;top:244.10999999999999px" width="12.5" height="12.5" viewBox="0 0 12.5 12.5" ><path d="M0.7 2.4V9.4C0.7 10.5 2.7 11.2 5 11.2C7.3 11.2 9.3 10.5 9.3 9.4V2.4" fill="#e4eaf0" stroke="#98a8b8" stroke-width="0.8"/><ellipse cx="5" cy="2.4" rx="4.3" ry="1.7" fill="#f2f5f8" stroke="#98a8b8" stroke-width="0.8"/><path d="M0.7 5.8C0.7 6.9 2.7 7.6 5 7.6C7.3 7.6 9.3 6.9 9.3 5.8" fill="none" stroke="#b4c0cc" stroke-width="0.8"/><path d="M9.6 3.8L6.6 8H8.6L7 11.8L12 6.8H9.8L11.4 3.8Z" fill="#f7c548" stroke="#e8a224" stroke-width="0.5"/></svg>
<span class="t r" style="top:241.61px;font-size:11px;line-height:15px;left:24.2px;transform-origin:0 50%;transform:scaleX(0.9364);color:#111;">Chuyên ngành</span>
<div style="left:321.8px;top:243.10999999999999px;width:39.3px;height:12.6px;background:#e1e1e1;border:1px solid #adadad;"></div>
<span class="t s" style="top:243.91px;font-size:8.25px;line-height:12px;left:341.5px;transform:translateX(-50%) scaleX(0.8679);color:#111;">Tải về</span>
<div style="left:0px;top:276.54999999999995px;width:367.5px;height:1px;background:#d2d2d2;"></div>
<svg class="a" style="left:6px;top:262.58px" width="12.5" height="12.5" viewBox="0 0 12.5 12.5" ><path d="M0.7 2.4V9.4C0.7 10.5 2.7 11.2 5 11.2C7.3 11.2 9.3 10.5 9.3 9.4V2.4" fill="#e4eaf0" stroke="#98a8b8" stroke-width="0.8"/><ellipse cx="5" cy="2.4" rx="4.3" ry="1.7" fill="#f2f5f8" stroke="#98a8b8" stroke-width="0.8"/><path d="M0.7 5.8C0.7 6.9 2.7 7.6 5 7.6C7.3 7.6 9.3 6.9 9.3 5.8" fill="none" stroke="#b4c0cc" stroke-width="0.8"/><path d="M9.6 3.8L6.6 8H8.6L7 11.8L12 6.8H9.8L11.4 3.8Z" fill="#f7c548" stroke="#e8a224" stroke-width="0.5"/></svg>
<span class="t r" style="top:260.08px;font-size:11px;line-height:15px;left:24.2px;transform-origin:0 50%;transform:scaleX(0.9193);color:#111;">Công ích</span>
<span class="t r" style="top:260.38px;font-size:11px;line-height:15px;left:123.8px;transform-origin:0 50%;transform:scaleX(0.9851);color:#1f8f2f;">(Đã có)</span>
<div style="left:321.8px;top:261.58px;width:39.3px;height:12.6px;background:#e1e1e1;border:1px solid #adadad;"></div>
<span class="t s" style="top:262.38px;font-size:8.25px;line-height:12px;left:341.5px;transform:translateX(-50%) scaleX(0.8679);color:#111;">Tải về</span>
<div style="left:0px;top:295.02px;width:367.5px;height:1px;background:#d2d2d2;"></div>
<svg class="a" style="left:6px;top:281.04999999999995px" width="12.5" height="12.5" viewBox="0 0 12.5 12.5" ><path d="M0.7 2.4V9.4C0.7 10.5 2.7 11.2 5 11.2C7.3 11.2 9.3 10.5 9.3 9.4V2.4" fill="#e4eaf0" stroke="#98a8b8" stroke-width="0.8"/><ellipse cx="5" cy="2.4" rx="4.3" ry="1.7" fill="#f2f5f8" stroke="#98a8b8" stroke-width="0.8"/><path d="M0.7 5.8C0.7 6.9 2.7 7.6 5 7.6C7.3 7.6 9.3 6.9 9.3 5.8" fill="none" stroke="#b4c0cc" stroke-width="0.8"/><path d="M9.6 3.8L6.6 8H8.6L7 11.8L12 6.8H9.8L11.4 3.8Z" fill="#f7c548" stroke="#e8a224" stroke-width="0.5"/></svg>
<span class="t r" style="top:278.55px;font-size:11px;line-height:15px;left:24.2px;transform-origin:0 50%;transform:scaleX(0.9389);color:#111;">Đà Nẵng</span>
<div style="left:321.8px;top:280.04999999999995px;width:39.3px;height:12.6px;background:#e1e1e1;border:1px solid #adadad;"></div>
<span class="t s" style="top:280.85px;font-size:8.25px;line-height:12px;left:341.5px;transform:translateX(-50%) scaleX(0.8679);color:#111;">Tải về</span>
</div>
<div style="left:691px;top:172.5px;width:11.600000000000023px;height:282.5px;background:#f0f0f0;"></div>
<div style="left:692.6px;top:185px;width:9px;height:48.7px;background:#c2c2c2;"></div>
<svg class="a" style="left:693.8px;top:177px" width="7" height="5" viewBox="0 0 7 5" ><path d="M0.8 4.2L3.5 1.2L6.2 4.2" fill="none" stroke="#444" stroke-width="1.1"/></svg>
<svg class="a" style="left:693.8px;top:446px" width="7" height="5" viewBox="0 0 7 5" ><path d="M0.8 0.8L3.5 3.8L6.2 0.8" fill="none" stroke="#444" stroke-width="1.1"/></svg>
<div style="left:320px;top:455px;width:382.6px;height:29.80000000000001px;background:#f0f0f0;"></div>
<div style="left:640px;top:463.2px;width:57px;height:15.2px;background:#e1e1e1;border:1px solid #adadad;"></div>
<span class="t s" style="top:465.40px;font-size:8.25px;line-height:12px;left:668.5px;transform:translateX(-50%) scaleX(0.9628);color:#111;">Đóng</span>
<svg class="a" style="left:0;top:0" width="1024" height="640" viewBox="0 0 1024 640" fill="none" stroke="#e81c24" stroke-width="3"><ellipse cx="444.8" cy="44.8" rx="25.7" ry="19.4" stroke-width="3.5"/><ellipse cx="580.3" cy="42.7" rx="86.5" ry="23.6" stroke-width="3.4"/><ellipse cx="519.4" cy="256.2" rx="222.9" ry="18.5" stroke-width="3"/><path d="M734.6 262 L739.2 353" stroke-width="3.2"/></svg>
<span class="t r b" style="top:352.60px;font-size:19.5px;line-height:24px;left:794.5px;transform:translateX(-50%) scaleX(0.9880);color:#e81c24;">Tỉnh Bắc Ninh</span>
<span class="t r b" style="top:374.30px;font-size:19.5px;line-height:24px;left:790.7px;transform:translateX(-50%) scaleX(0.9880);color:#e81c24;">TẢI VỀ</span>
</body></html>
